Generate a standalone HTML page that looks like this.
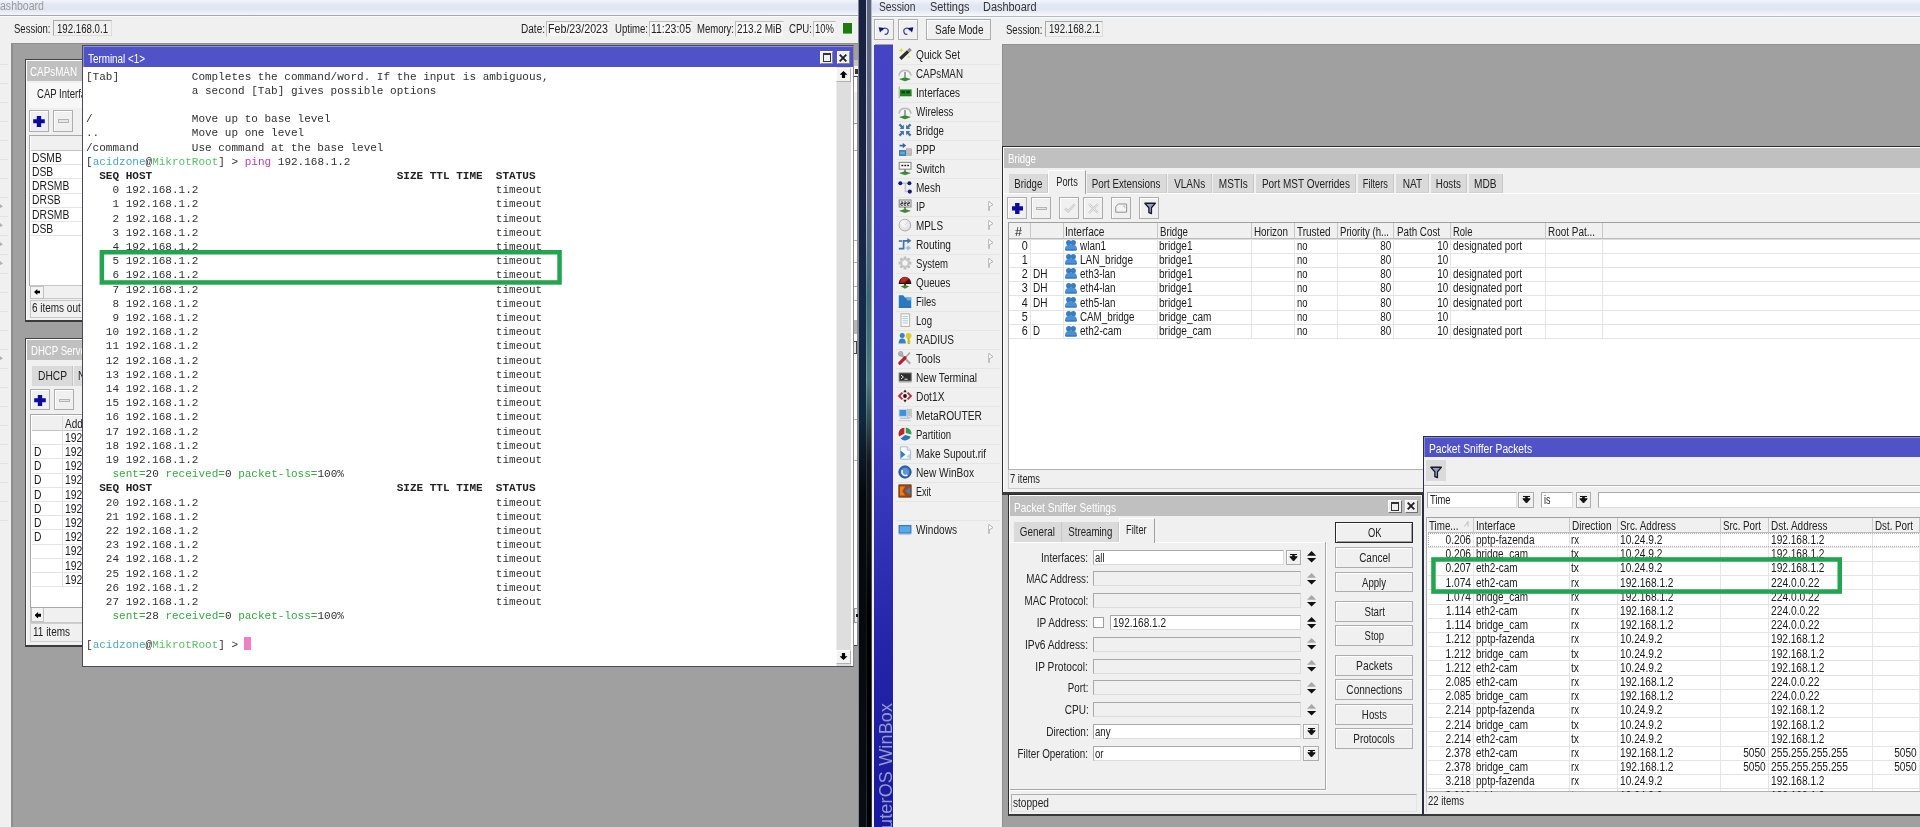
<!DOCTYPE html>
<html><head><meta charset="utf-8"><title>WinBox</title>
<style>
html,body{margin:0;padding:0;background:#a0a0a0;}
#root{will-change:transform;position:relative;width:1920px;height:827px;overflow:hidden;background:#a0a0a0;font-family:"Liberation Sans",sans-serif;font-size:12px;}
.a{position:absolute;box-sizing:border-box;}
.t{position:absolute;white-space:nowrap;display:block;transform-origin:0 0;font-family:"Liberation Sans",sans-serif;}
.m{position:absolute;white-space:pre;font-family:"Liberation Mono",monospace;font-size:11.035px;line-height:14px;color:#303030;}
.m b{font-weight:bold;color:#222;}
.btn{border:1px solid #adadad;background:#f0f0f0;box-shadow:inset 1px 1px 0 #fff;}
.inp{border:1px solid #a8a8a8;border-right-color:#dcdcdc;border-bottom-color:#dcdcdc;background:#fff;}
.inpd{border:1px solid #a8a8a8;border-right-color:#dcdcdc;border-bottom-color:#dcdcdc;background:#f0f0f0;}
svg{position:absolute;overflow:visible;}

</style></head>
<body>
<div id="root">
<div class="a " style="left:0px;top:0px;width:858px;height:16px;background:linear-gradient(#f3f5fb 0%,#e2e7f3 30%,#dfe5f2 60%,#e9edf6 82%,#f4f5fa 100%);border-bottom:1px solid #a4a8b2;"></div>
<span class="t" style="left:0px;top:-0.74px;font-size:12px;line-height:14.4px;color:#9a9a9a;transform:scaleX(0.879);">ashboard</span>
<div class="a " style="left:0px;top:16px;width:858px;height:28px;background:#f0f0f0;border-top:1px solid #fafafa;"></div>
<span class="t" style="left:13.5px;top:22.46px;font-size:12px;line-height:14.4px;color:#222;transform:scaleX(0.793);">Session:</span>
<div class="a inpd" style="left:53px;top:20px;width:59px;height:16px;"></div>
<span class="t" style="left:57px;top:21.66px;font-size:12px;line-height:14.4px;color:#222;transform:scaleX(0.805);">192.168.0.1</span>
<span class="t" style="left:521px;top:22.46px;font-size:12px;line-height:14.4px;color:#222;transform:scaleX(0.837);">Date:</span>
<div class="a " style="left:546px;top:21px;width:64px;height:16px;background:#f6f6f6;border:1px solid #bcbcbc;border-right-color:#f0f0f0;border-bottom-color:#f0f0f0;"></div>
<span class="t" style="left:548px;top:21.76px;font-size:12px;line-height:14.4px;color:#222;transform:scaleX(0.890);">Feb/23/2023</span>
<span class="t" style="left:615px;top:22.46px;font-size:12px;line-height:14.4px;color:#222;transform:scaleX(0.798);">Uptime:</span>
<div class="a " style="left:649px;top:21px;width:44px;height:16px;background:#f6f6f6;border:1px solid #bcbcbc;border-right-color:#f0f0f0;border-bottom-color:#f0f0f0;"></div>
<span class="t" style="left:651px;top:21.76px;font-size:12px;line-height:14.4px;color:#222;transform:scaleX(0.873);">11:23:05</span>
<span class="t" style="left:697px;top:22.46px;font-size:12px;line-height:14.4px;color:#222;transform:scaleX(0.793);">Memory:</span>
<div class="a " style="left:735px;top:21px;width:49px;height:16px;background:#f6f6f6;border:1px solid #bcbcbc;border-right-color:#f0f0f0;border-bottom-color:#f0f0f0;"></div>
<span class="t" style="left:737px;top:21.76px;font-size:12px;line-height:14.4px;color:#222;transform:scaleX(0.833);">213.2 MiB</span>
<span class="t" style="left:788.5px;top:22.46px;font-size:12px;line-height:14.4px;color:#222;transform:scaleX(0.802);">CPU:</span>
<div class="a " style="left:813px;top:21px;width:23px;height:16px;background:#f6f6f6;border:1px solid #bcbcbc;border-right-color:#f0f0f0;border-bottom-color:#f0f0f0;"></div>
<span class="t" style="left:815px;top:21.76px;font-size:12px;line-height:14.4px;color:#222;transform:scaleX(0.791);">10%</span>
<div class="a " style="left:843px;top:23px;width:9.3px;height:11px;background:#1c7a10;border-bottom:1px solid #52c24a;"></div>
<div class="a " style="left:0px;top:43px;width:10.5px;height:784px;background:#f0f0f0;"></div>
<div class="a " style="left:0px;top:64px;width:8px;height:1px;background:#e2e2e2;"></div>
<div class="a " style="left:0px;top:83px;width:8px;height:1px;background:#e2e2e2;"></div>
<div class="a " style="left:0px;top:102px;width:8px;height:1px;background:#e2e2e2;"></div>
<div class="a " style="left:0px;top:121px;width:8px;height:1px;background:#e2e2e2;"></div>
<div class="a " style="left:0px;top:140px;width:8px;height:1px;background:#e2e2e2;"></div>
<div class="a " style="left:0px;top:159px;width:8px;height:1px;background:#e2e2e2;"></div>
<div class="a " style="left:0px;top:178px;width:8px;height:1px;background:#e2e2e2;"></div>
<div class="a " style="left:0px;top:197px;width:8px;height:1px;background:#e2e2e2;"></div>
<div class="a " style="left:0px;top:216px;width:8px;height:1px;background:#e2e2e2;"></div>
<div class="a " style="left:0px;top:235px;width:8px;height:1px;background:#e2e2e2;"></div>
<div class="a " style="left:0px;top:254px;width:8px;height:1px;background:#e2e2e2;"></div>
<div class="a " style="left:0px;top:273px;width:8px;height:1px;background:#e2e2e2;"></div>
<div class="a " style="left:0px;top:292px;width:8px;height:1px;background:#e2e2e2;"></div>
<div class="a " style="left:0px;top:311px;width:8px;height:1px;background:#e2e2e2;"></div>
<div class="a " style="left:0px;top:330px;width:8px;height:1px;background:#e2e2e2;"></div>
<div class="a " style="left:0px;top:349px;width:8px;height:1px;background:#e2e2e2;"></div>
<div class="a " style="left:0px;top:368px;width:8px;height:1px;background:#e2e2e2;"></div>
<div class="a " style="left:0px;top:387px;width:8px;height:1px;background:#e2e2e2;"></div>
<div class="a " style="left:0px;top:406px;width:8px;height:1px;background:#e2e2e2;"></div>
<div class="a " style="left:0px;top:425px;width:8px;height:1px;background:#e2e2e2;"></div>
<div class="a " style="left:0px;top:444px;width:8px;height:1px;background:#e2e2e2;"></div>
<div class="a " style="left:0px;top:463px;width:8px;height:1px;background:#e2e2e2;"></div>
<div class="a " style="left:0px;top:482px;width:8px;height:1px;background:#e2e2e2;"></div>
<div class="a " style="left:0px;top:501px;width:8px;height:1px;background:#e2e2e2;"></div>
<div class="a " style="left:0px;top:520px;width:8px;height:1px;background:#e2e2e2;"></div>
<div class="a " style="left:0px;top:204px;width:3px;height:4px;background:#b0b0b0;clip-path:polygon(0 0,100% 60%,0 100%);"></div>
<div class="a " style="left:0px;top:223px;width:3px;height:4px;background:#b0b0b0;clip-path:polygon(0 0,100% 60%,0 100%);"></div>
<div class="a " style="left:0px;top:242px;width:3px;height:4px;background:#b0b0b0;clip-path:polygon(0 0,100% 60%,0 100%);"></div>
<div class="a " style="left:0px;top:261px;width:3px;height:4px;background:#b0b0b0;clip-path:polygon(0 0,100% 60%,0 100%);"></div>
<div class="a " style="left:0px;top:356px;width:3px;height:4px;background:#b0b0b0;clip-path:polygon(0 0,100% 60%,0 100%);"></div>
<div class="a " style="left:10.5px;top:43px;width:847.5px;height:784px;background:#a0a0a0;border-left:2px solid #8e8e8e;border-top:1px solid #8e8e8e;"></div>
<div class="a " style="left:24.5px;top:59px;width:70px;height:263px;background:#f0f0f0;border:1.5px solid #444;border-bottom:2.5px solid #3a3a3a;box-shadow:inset 1px 1px 0 #fff;"></div>
<div class="a " style="left:26.5px;top:61px;width:68px;height:19.5px;background:#c0c0c0;"></div>
<span class="t" style="left:30px;top:65.26px;font-size:12px;line-height:14.4px;color:#fff;transform:scaleX(0.820);">CAPsMAN</span>
<div class="a " style="left:28.5px;top:82.5px;width:68px;height:25px;background:#f7f7f7;"></div>
<span class="t" style="left:36.5px;top:87.26px;font-size:12px;line-height:14.4px;color:#222;transform:scaleX(0.795);">CAP Interfaces</span>
<div class="a btn" style="left:29.3px;top:110px;width:20px;height:21.5px;"></div>
<div class="a " style="left:33.2px;top:115.6px;width:11.6px;height:11.4px;background:#0a0c9c;clip-path:polygon(31% 0,69% 0,69% 32%,100% 32%,100% 68%,69% 68%,69% 100%,31% 100%,31% 68%,0 68%,0 32%,31% 32%);"></div>
<div class="a btn" style="left:52.8px;top:110px;width:20.5px;height:21.5px;"></div>
<div class="a " style="left:57.5px;top:119px;width:11px;height:3.5px;border:1px solid #b4b4b4;background:#e6e6e6;"></div>
<div class="a " style="left:29.3px;top:135px;width:60px;height:150.5px;background:#fff;border:1px solid #a8a8a8;"></div>
<div class="a " style="left:30.5px;top:136px;width:60px;height:14.5px;background:#f0f0f0;border-bottom:1px solid #c4c4c4;"></div>
<span class="t" style="left:32px;top:150.86px;font-size:12px;line-height:14.4px;color:#1a1a1a;transform:scaleX(0.860);">DSMB</span>
<div class="a " style="left:30.5px;top:164px;width:60px;height:1px;background:#e4e4e4;"></div>
<span class="t" style="left:32px;top:165.06px;font-size:12px;line-height:14.4px;color:#1a1a1a;transform:scaleX(0.860);">DSB</span>
<div class="a " style="left:30.5px;top:178px;width:60px;height:1px;background:#e4e4e4;"></div>
<span class="t" style="left:32px;top:179.26px;font-size:12px;line-height:14.4px;color:#1a1a1a;transform:scaleX(0.860);">DRSMB</span>
<div class="a " style="left:30.5px;top:193px;width:60px;height:1px;background:#e4e4e4;"></div>
<span class="t" style="left:32px;top:193.46px;font-size:12px;line-height:14.4px;color:#1a1a1a;transform:scaleX(0.860);">DRSB</span>
<div class="a " style="left:30.5px;top:207px;width:60px;height:1px;background:#e4e4e4;"></div>
<span class="t" style="left:32px;top:207.66px;font-size:12px;line-height:14.4px;color:#1a1a1a;transform:scaleX(0.860);">DRSMB</span>
<div class="a " style="left:30.5px;top:221px;width:60px;height:1px;background:#e4e4e4;"></div>
<span class="t" style="left:32px;top:221.86px;font-size:12px;line-height:14.4px;color:#1a1a1a;transform:scaleX(0.860);">DSB</span>
<div class="a " style="left:30.5px;top:235px;width:60px;height:1px;background:#e4e4e4;"></div>
<div class="a " style="left:29.5px;top:285px;width:60px;height:14px;background:#f0f0f0;border:1px solid #c8c8c8;"></div>
<div class="a " style="left:30px;top:285.5px;width:14px;height:13px;background:#f4f4f4;border:1px solid #c0c0c0;"></div>
<div class="a " style="left:34px;top:289px;width:6px;height:6px;background:#000;clip-path:polygon(0 50%,55% 0,55% 28%,100% 28%,100% 72%,55% 72%,55% 100%);"></div>
<div class="a " style="left:29.5px;top:299.5px;width:60px;height:18px;border:1px solid #c8c8c8;border-right:0;background:#f0f0f0;"></div>
<span class="t" style="left:32px;top:301.26px;font-size:12px;line-height:14.4px;color:#222;transform:scaleX(0.830);">6 items out of 8</span>
<div class="a " style="left:24.5px;top:337.5px;width:70px;height:309.5px;background:#f0f0f0;border:1.5px solid #444;border-bottom:2.5px solid #3a3a3a;box-shadow:inset 1px 1px 0 #fff;"></div>
<div class="a " style="left:27px;top:339.5px;width:68px;height:20px;background:#c0c0c0;"></div>
<span class="t" style="left:31px;top:344.26px;font-size:12px;line-height:14.4px;color:#fff;transform:scaleX(0.800);">DHCP Server</span>
<div class="a " style="left:32px;top:366px;width:41px;height:19.5px;background:#dadada;border-right:1px solid #c4c4c4;"></div>
<span class="t" style="left:37.5px;top:369.26px;font-size:12px;line-height:14.4px;color:#222;transform:scaleX(0.853);">DHCP</span>
<div class="a " style="left:74px;top:366px;width:20px;height:19.5px;background:#dadada;"></div>
<span class="t" style="left:78px;top:369.26px;font-size:12px;line-height:14.4px;color:#222;transform:scaleX(0.830);">Networks</span>
<div class="a btn" style="left:30.3px;top:389.3px;width:20px;height:21.2px;"></div>
<div class="a " style="left:34.2px;top:394.5px;width:11.6px;height:11.4px;background:#0a0c9c;clip-path:polygon(31% 0,69% 0,69% 32%,100% 32%,100% 68%,69% 68%,69% 100%,31% 100%,31% 68%,0 68%,0 32%,31% 32%);"></div>
<div class="a btn" style="left:53.8px;top:389.3px;width:20.5px;height:21.2px;"></div>
<div class="a " style="left:58.5px;top:398.5px;width:11px;height:3.5px;border:1px solid #b4b4b4;background:#e6e6e6;"></div>
<div class="a " style="left:30.3px;top:414.3px;width:60px;height:194px;background:#fff;border:1px solid #a8a8a8;"></div>
<div class="a " style="left:31.5px;top:415.5px;width:60px;height:15px;background:#f0f0f0;border-bottom:1px solid #c4c4c4;"></div>
<div class="a " style="left:62px;top:415.5px;width:1px;height:171px;background:#dcdcdc;"></div>
<span class="t" style="left:65px;top:416.76px;font-size:12px;line-height:14.4px;color:#222;transform:scaleX(0.830);">Address</span>
<span class="t" style="left:65px;top:430.86px;font-size:12px;line-height:14.4px;color:#1a1a1a;transform:scaleX(0.860);">192.168.0.1</span>
<div class="a " style="left:31.5px;top:444px;width:60px;height:1px;background:#e4e4e4;"></div>
<span class="t" style="left:33.5px;top:445.06px;font-size:12px;line-height:14.4px;color:#1a1a1a;transform:scaleX(0.860);">D</span>
<span class="t" style="left:65px;top:445.06px;font-size:12px;line-height:14.4px;color:#1a1a1a;transform:scaleX(0.860);">192.168.0.1</span>
<div class="a " style="left:31.5px;top:458px;width:60px;height:1px;background:#e4e4e4;"></div>
<span class="t" style="left:33.5px;top:459.26px;font-size:12px;line-height:14.4px;color:#1a1a1a;transform:scaleX(0.860);">D</span>
<span class="t" style="left:65px;top:459.26px;font-size:12px;line-height:14.4px;color:#1a1a1a;transform:scaleX(0.860);">192.168.0.1</span>
<div class="a " style="left:31.5px;top:473px;width:60px;height:1px;background:#e4e4e4;"></div>
<span class="t" style="left:33.5px;top:473.46px;font-size:12px;line-height:14.4px;color:#1a1a1a;transform:scaleX(0.860);">D</span>
<span class="t" style="left:65px;top:473.46px;font-size:12px;line-height:14.4px;color:#1a1a1a;transform:scaleX(0.860);">192.168.0.1</span>
<div class="a " style="left:31.5px;top:487px;width:60px;height:1px;background:#e4e4e4;"></div>
<span class="t" style="left:33.5px;top:487.66px;font-size:12px;line-height:14.4px;color:#1a1a1a;transform:scaleX(0.860);">D</span>
<span class="t" style="left:65px;top:487.66px;font-size:12px;line-height:14.4px;color:#1a1a1a;transform:scaleX(0.860);">192.168.0.1</span>
<div class="a " style="left:31.5px;top:501px;width:60px;height:1px;background:#e4e4e4;"></div>
<span class="t" style="left:33.5px;top:501.86px;font-size:12px;line-height:14.4px;color:#1a1a1a;transform:scaleX(0.860);">D</span>
<span class="t" style="left:65px;top:501.86px;font-size:12px;line-height:14.4px;color:#1a1a1a;transform:scaleX(0.860);">192.168.0.1</span>
<div class="a " style="left:31.5px;top:515px;width:60px;height:1px;background:#e4e4e4;"></div>
<span class="t" style="left:33.5px;top:516.06px;font-size:12px;line-height:14.4px;color:#1a1a1a;transform:scaleX(0.860);">D</span>
<span class="t" style="left:65px;top:516.06px;font-size:12px;line-height:14.4px;color:#1a1a1a;transform:scaleX(0.860);">192.168.0.1</span>
<div class="a " style="left:31.5px;top:529px;width:60px;height:1px;background:#e4e4e4;"></div>
<span class="t" style="left:33.5px;top:530.26px;font-size:12px;line-height:14.4px;color:#1a1a1a;transform:scaleX(0.860);">D</span>
<span class="t" style="left:65px;top:530.26px;font-size:12px;line-height:14.4px;color:#1a1a1a;transform:scaleX(0.860);">192.168.0.1</span>
<div class="a " style="left:31.5px;top:544px;width:60px;height:1px;background:#e4e4e4;"></div>
<span class="t" style="left:65px;top:544.46px;font-size:12px;line-height:14.4px;color:#1a1a1a;transform:scaleX(0.860);">192.168.0.1</span>
<div class="a " style="left:31.5px;top:558px;width:60px;height:1px;background:#e4e4e4;"></div>
<span class="t" style="left:65px;top:558.66px;font-size:12px;line-height:14.4px;color:#1a1a1a;transform:scaleX(0.860);">192.168.0.1</span>
<div class="a " style="left:31.5px;top:572px;width:60px;height:1px;background:#e4e4e4;"></div>
<span class="t" style="left:65px;top:572.86px;font-size:12px;line-height:14.4px;color:#1a1a1a;transform:scaleX(0.860);">192.168.0.1</span>
<div class="a " style="left:31.5px;top:586px;width:60px;height:1px;background:#e4e4e4;"></div>
<div class="a " style="left:30.3px;top:608px;width:60px;height:14.5px;background:#f0f0f0;border:1px solid #c8c8c8;border-top:0;"></div>
<div class="a " style="left:30.8px;top:608px;width:13.5px;height:14px;background:#f4f4f4;border:1px solid #c0c0c0;border-top:0;"></div>
<div class="a " style="left:34.5px;top:612px;width:6.5px;height:6.5px;background:#000;clip-path:polygon(0 50%,55% 0,55% 28%,100% 28%,100% 72%,55% 72%,55% 100%);"></div>
<div class="a " style="left:30.3px;top:622.5px;width:60px;height:19px;border:1px solid #cfcfcf;border-right:0;background:#f0f0f0;"></div>
<span class="t" style="left:33px;top:624.76px;font-size:12px;line-height:14.4px;color:#222;transform:scaleX(0.832);">11 items</span>
<div class="a " style="left:851px;top:68px;width:7px;height:578px;background:#fff;border-left:1px solid #555;border-right:1px solid #8a8a8a;border-bottom:1px solid #444;"></div>
<div class="a " style="left:854px;top:608px;width:4px;height:14.5px;background:#ececec;border:1px solid #9a9a9a;"></div>
<div class="a " style="left:855.5px;top:613.5px;width:2px;height:3px;background:#111;"></div>
<div class="a " style="left:853px;top:59.5px;width:5px;height:7px;background:#c4c4c4;"></div>
<div class="a " style="left:852px;top:66px;width:6px;height:11px;background:#f4f4f4;border-bottom:1px solid #444;"></div>
<div class="a " style="left:855px;top:69px;width:2.5px;height:5px;background:#333;"></div>
<div class="a " style="left:852px;top:92px;width:5px;height:32px;background:#f0f0f0;border-bottom:1px solid #999;"></div>
<div class="a " style="left:852px;top:150px;width:5px;height:1px;background:#b0b0b0;"></div>
<div class="a " style="left:852px;top:240px;width:5px;height:1px;background:#b0b0b0;"></div>
<div class="a " style="left:852px;top:262px;width:5px;height:1px;background:#b0b0b0;"></div>
<div class="a " style="left:852px;top:286px;width:5px;height:1px;background:#b0b0b0;"></div>
<div class="a " style="left:852px;top:300px;width:5px;height:1px;background:#b0b0b0;"></div>
<div class="a " style="left:852px;top:325px;width:5px;height:1px;background:#b0b0b0;"></div>
<div class="a " style="left:852px;top:352px;width:5px;height:1px;background:#b0b0b0;"></div>
<div class="a " style="left:852px;top:419px;width:5px;height:1px;background:#b0b0b0;"></div>
<div class="a " style="left:852px;top:460px;width:5px;height:1px;background:#b0b0b0;"></div>
<div class="a " style="left:852px;top:320px;width:5px;height:14px;background:#b8b8b8;"></div>
<div class="a " style="left:852px;top:341px;width:5px;height:13px;background:#e8e8e8;border:1px solid #444;"></div>
<div class="a " style="left:82px;top:45.3px;width:771.8px;height:622px;background:#fff;border:1px solid #4a4a5a;border-right-color:#8a8a8a;"></div>
<div class="a " style="left:83px;top:46.3px;width:769.5px;height:20.3px;background:#5052c8;border-top:1px solid #8c8ce0;border-left:1px solid #8c8ce0;"></div>
<span class="t" style="left:88px;top:51.56px;font-size:12px;line-height:14.4px;color:#fff;transform:scaleX(0.822);">Terminal &lt;1&gt;</span>
<div class="a " style="left:820px;top:51px;width:13px;height:12.5px;background:#f0f0f0;border:1px solid #fff;border-right-color:#8a8a8a;border-bottom-color:#8a8a8a;"></div>
<div class="a " style="left:822.5px;top:53px;width:8.5px;height:8.5px;border:1px solid #333;border-top-width:2px;"></div>
<div class="a " style="left:836.5px;top:51px;width:13px;height:12.5px;background:#f0f0f0;border:1px solid #fff;border-right-color:#8a8a8a;border-bottom-color:#8a8a8a;"></div>
<svg style="left:839px;top:53.5px" width="8" height="8" viewBox="0 0 8 8"><path d="M0.7 0.7L7.3 7.3M7.3 0.7L0.7 7.3" stroke="#222" stroke-width="1.9"/></svg>
<div class="a " style="left:835.5px;top:67px;width:15px;height:599px;background:#dedede;border-left:1px solid #ececec;"></div>
<div class="a " style="left:836px;top:68px;width:14.5px;height:13.5px;background:#f2f2f2;border:1px solid #fff;border-right-color:#b0b0b0;border-bottom-color:#b0b0b0;"></div>
<div class="a " style="left:839.5px;top:71px;width:8px;height:7px;background:#000;clip-path:polygon(50% 0,100% 55%,70% 55%,70% 100%,30% 100%,30% 55%,0 55%);"></div>
<div class="a " style="left:836px;top:649.5px;width:14.5px;height:14px;background:#f2f2f2;border:1px solid #fff;border-right-color:#b0b0b0;border-bottom-color:#b0b0b0;"></div>
<div class="a " style="left:839.5px;top:653px;width:8px;height:7px;background:#000;clip-path:polygon(50% 100%,100% 45%,70% 45%,70% 0,30% 0,30% 45%,0 45%);"></div>
<div class="m" style="left:86px;top:69.6px">[Tab]           Completes the command/word. If the input is ambiguous,</div>
<div class="m" style="left:86px;top:83.8px">                a second [Tab] gives possible options</div>
<div class="m" style="left:86px;top:112.2px">/               Move up to base level</div>
<div class="m" style="left:86px;top:126.4px">..              Move up one level</div>
<div class="m" style="left:86px;top:140.6px">/command        Use command at the base level</div>
<div class="m" style="left:86px;top:154.8px">[<span style="color:#4aa8b8">acidzone</span>@<span style="color:#58bd68">MikrotRoot</span>] &gt; <span style="color:#b244b2">ping</span> 192.168.1.2</div>
<div class="m" style="left:86px;top:169.0px"><b>  SEQ HOST                                     SIZE TTL TIME  STATUS</b></div>
<div class="m" style="left:86px;top:183.2px">    0 192.168.1.2                                             timeout</div>
<div class="m" style="left:86px;top:197.4px">    1 192.168.1.2                                             timeout</div>
<div class="m" style="left:86px;top:211.6px">    2 192.168.1.2                                             timeout</div>
<div class="m" style="left:86px;top:225.8px">    3 192.168.1.2                                             timeout</div>
<div class="m" style="left:86px;top:240.0px">    4 192.168.1.2                                             timeout</div>
<div class="m" style="left:86px;top:254.2px">    5 192.168.1.2                                             timeout</div>
<div class="m" style="left:86px;top:268.4px">    6 192.168.1.2                                             timeout</div>
<div class="m" style="left:86px;top:282.6px">    7 192.168.1.2                                             timeout</div>
<div class="m" style="left:86px;top:296.8px">    8 192.168.1.2                                             timeout</div>
<div class="m" style="left:86px;top:311.0px">    9 192.168.1.2                                             timeout</div>
<div class="m" style="left:86px;top:325.2px">   10 192.168.1.2                                             timeout</div>
<div class="m" style="left:86px;top:339.4px">   11 192.168.1.2                                             timeout</div>
<div class="m" style="left:86px;top:353.6px">   12 192.168.1.2                                             timeout</div>
<div class="m" style="left:86px;top:367.8px">   13 192.168.1.2                                             timeout</div>
<div class="m" style="left:86px;top:382.0px">   14 192.168.1.2                                             timeout</div>
<div class="m" style="left:86px;top:396.2px">   15 192.168.1.2                                             timeout</div>
<div class="m" style="left:86px;top:410.4px">   16 192.168.1.2                                             timeout</div>
<div class="m" style="left:86px;top:424.6px">   17 192.168.1.2                                             timeout</div>
<div class="m" style="left:86px;top:438.8px">   18 192.168.1.2                                             timeout</div>
<div class="m" style="left:86px;top:453.0px">   19 192.168.1.2                                             timeout</div>
<div class="m" style="left:86px;top:467.2px">    <span style="color:#3aa646">sent</span><span style="color:#3aa646">=</span>20 <span style="color:#3aa646">received</span><span style="color:#3aa646">=</span>0 <span style="color:#3aa646">packet-loss</span><span style="color:#3aa646">=</span>100%</div>
<div class="m" style="left:86px;top:481.4px"><b>  SEQ HOST                                     SIZE TTL TIME  STATUS</b></div>
<div class="m" style="left:86px;top:495.6px">   20 192.168.1.2                                             timeout</div>
<div class="m" style="left:86px;top:509.8px">   21 192.168.1.2                                             timeout</div>
<div class="m" style="left:86px;top:524.0px">   22 192.168.1.2                                             timeout</div>
<div class="m" style="left:86px;top:538.2px">   23 192.168.1.2                                             timeout</div>
<div class="m" style="left:86px;top:552.4px">   24 192.168.1.2                                             timeout</div>
<div class="m" style="left:86px;top:566.6px">   25 192.168.1.2                                             timeout</div>
<div class="m" style="left:86px;top:580.8px">   26 192.168.1.2                                             timeout</div>
<div class="m" style="left:86px;top:595.0px">   27 192.168.1.2                                             timeout</div>
<div class="m" style="left:86px;top:609.2px">    <span style="color:#3aa646">sent</span><span style="color:#3aa646">=</span>28 <span style="color:#3aa646">received</span><span style="color:#3aa646">=</span>0 <span style="color:#3aa646">packet-loss</span><span style="color:#3aa646">=</span>100%</div>
<div class="m" style="left:86px;top:637.6px">[<span style="color:#4aa8b8">acidzone</span>@<span style="color:#58bd68">MikrotRoot</span>] &gt; <span style="position:absolute;left:158.2px;top:-1.1px;width:6.8px;height:13.8px;background:#f27fc4"></span></div>
<svg style="left:0;top:0" width="860" height="300"><rect x="101.85" y="252.25" width="457.7" height="30.2" fill="none" stroke="#23a44e" stroke-width="4.5"/></svg>
<div class="a " style="left:858px;top:0px;width:14px;height:827px;background:linear-gradient(#1a2244 0%,#1a2244 22%,#16294a 35%,#102a44 50%,#05080c 60%,#0a0c10 100%);"></div>
<div class="a " style="left:858px;top:0px;width:1px;height:827px;background:#808694;"></div>
<div class="a " style="left:865.5px;top:0px;width:1.5px;height:827px;background:linear-gradient(#c4cad8 0%,#c4cad8 24%,#5a8890 36%,#7aa0a0 46%,#30383c 55%,#101418 75%,#203050 100%);"></div>
<div class="a " style="left:867px;top:0px;width:4px;height:827px;background:linear-gradient(#5c6680 0%,#5c6680 24%,#3c6674 36%,#4c787c 46%,#14181c 56%,#000 75%,#000 100%);"></div>
<div class="a " style="left:871px;top:0px;width:1px;height:827px;background:linear-gradient(#b8bccc 0%,#9098ac 25%,#8ea8ac 45%,#50585c 60%,#30343c 100%);"></div>
<div class="a " style="left:872px;top:0px;width:1048px;height:17px;background:linear-gradient(#f3f5fb 0%,#e2e7f3 30%,#dfe5f2 58%,#eceff7 80%,#f8f9fc 100%);border-bottom:1px solid #b4b8c0;"></div>
<span class="t" style="left:879.4px;top:-0.24px;font-size:12px;line-height:14.4px;color:#333;transform:scaleX(0.855);">Session</span>
<span class="t" style="left:929.5px;top:-0.24px;font-size:12px;line-height:14.4px;color:#333;transform:scaleX(0.911);">Settings</span>
<span class="t" style="left:982.5px;top:-0.24px;font-size:12px;line-height:14.4px;color:#333;transform:scaleX(0.911);">Dashboard</span>
<div class="a " style="left:872px;top:17px;width:1048px;height:27px;background:#f0f0f0;border-top:1px solid #fafafa;"></div>
<div class="a btn" style="left:874.3px;top:19.3px;width:20px;height:21px;"></div>
<svg style="left:878.2px;top:24.6px" width="12" height="11" viewBox="0 0 12 11"><path d="M4.2 5.2A3.1 3.1 0 1 1 6.6 9.3" fill="none" stroke="#3c3c7c" stroke-width="1.15"/><path d="M0.6 2.2L6 3 2 7.4Z" fill="#10107a"/></svg>
<div class="a btn" style="left:898.3px;top:19.3px;width:20px;height:21px;"></div>
<svg style="left:902.2px;top:24.6px" width="12" height="11" viewBox="0 0 12 11"><path d="M7.8 5.2A3.1 3.1 0 1 0 5.4 9.3" fill="none" stroke="#3c3c7c" stroke-width="1.15"/><path d="M11.4 2.2L6 3 10 7.4Z" fill="#10107a"/></svg>
<div class="a btn" style="left:925.8px;top:19.3px;width:65.5px;height:21px;"></div>
<span class="t" style="left:935px;top:23.26px;font-size:12px;line-height:14.4px;color:#222;transform:scaleX(0.836);">Safe Mode</span>
<span class="t" style="left:1005.6px;top:23.26px;font-size:12px;line-height:14.4px;color:#222;transform:scaleX(0.793);">Session:</span>
<div class="a inpd" style="left:1045px;top:21px;width:58px;height:16px;"></div>
<span class="t" style="left:1048.5px;top:22.26px;font-size:12px;line-height:14.4px;color:#222;transform:scaleX(0.805);">192.168.2.1</span>
<div class="a " style="left:872px;top:44px;width:2.5px;height:783px;background:#f0f0f0;"></div>
<div class="a " style="left:874.3px;top:45px;width:18.7px;height:782px;background:linear-gradient(#4444c4 0%,#3e3ec0 50%,#2424a8 78%,#1818a0 100%);"></div>
<div class="a" style="left:875.5px;top:829px;width:200px;height:18px;transform-origin:0 0;transform:rotate(-90deg) scaleX(0.945);font-size:19px;line-height:19px;color:#949bcb;white-space:nowrap;letter-spacing:0.2px">uterOS WinBox</div>
<div class="a " style="left:893px;top:44px;width:109px;height:783px;background:#f0f0f0;"></div>
<div class="a " style="left:1002px;top:43.5px;width:918px;height:784px;background:#a0a0a0;border-left:1px solid #909090;border-top:1px solid #909090;"></div>
<span class="t" style="left:915.8px;top:47.76px;font-size:12px;line-height:14.4px;color:#222;transform:scaleX(0.846);">Quick Set</span>
<svg style="left:897.5px;top:46.9px" width="14" height="14" viewBox="0 0 14 14"><path d="M1.2 10.6L9 3.2L11.2 5.6L3.4 13Z" fill="#2b2b2b"/><path d="M9 3.2L11.6 .8L13.8 3.2L11.2 5.6Z" fill="#8c8c8c"/><path d="M3.2 .6L4 2.4L5.8 3.2L4 4L3.2 5.8L2.4 4L.6 3.2L2.4 2.4Z" fill="#d8e428"/><path d="M10.8 8.2L11.3 9.4L12.5 9.9L11.3 10.4L10.8 11.6L10.3 10.4L9.1 9.9L10.3 9.4Z" fill="#d8e428"/></svg>
<div class="a " style="left:896px;top:63.5px;width:104px;height:1px;background:#e5e5e5;"></div>
<span class="t" style="left:915.8px;top:66.76px;font-size:12px;line-height:14.4px;color:#222;transform:scaleX(0.820);">CAPsMAN</span>
<svg style="left:897.5px;top:65.9px" width="14" height="14" viewBox="0 0 14 14"><path d="M0.9 9.2A6.1 6.3 0 0 1 13.1 9.2Z" fill="#f6f6f6"/><path d="M1 9.6A6.1 6.3 0 0 1 13 9.6" fill="none" stroke="#bdbdbd" stroke-width="1.7"/><path d="M7 6V11.4" stroke="#5a5a5a" stroke-width="1.1"/><path d="M1.6 13L7 11.2L12.4 13L7 14.9Z" fill="#2f8f2f"/><path d="M1.6 13L7 14.9L12.4 13" fill="none" stroke="#1d6a1d" stroke-width=".5"/></svg>
<div class="a " style="left:896px;top:82.5px;width:104px;height:1px;background:#e5e5e5;"></div>
<span class="t" style="left:915.8px;top:85.76px;font-size:12px;line-height:14.4px;color:#222;transform:scaleX(0.835);">Interfaces</span>
<svg style="left:897.5px;top:84.9px" width="14" height="14" viewBox="0 0 14 14"><path d="M1.2 1.4V13.2" stroke="#8fb08f" stroke-width="1"/><rect x="2" y="4.4" width="11.6" height="6.4" fill="#1f8a1f"/><rect x="3.4" y="5.8" width="3.6" height="2.6" fill="#0b4a0b"/><rect x="8.2" y="5.8" width="3.6" height="2.6" fill="#0b4a0b"/><path d="M2 10.8H13.6" stroke="#0f5f0f" stroke-width=".8"/></svg>
<div class="a " style="left:896px;top:101.5px;width:104px;height:1px;background:#e5e5e5;"></div>
<span class="t" style="left:915.8px;top:104.76px;font-size:12px;line-height:14.4px;color:#222;transform:scaleX(0.815);">Wireless</span>
<svg style="left:897.5px;top:103.9px" width="14" height="14" viewBox="0 0 14 14"><path d="M0.9 9.2A6.1 6.3 0 0 1 13.1 9.2Z" fill="#f6f6f6"/><path d="M1 9.6A6.1 6.3 0 0 1 13 9.6" fill="none" stroke="#bdbdbd" stroke-width="1.7"/><path d="M7 6V11.4" stroke="#5a5a5a" stroke-width="1.1"/><path d="M1.6 13L7 11.2L12.4 13L7 14.9Z" fill="#2f8f2f"/><path d="M1.6 13L7 14.9L12.4 13" fill="none" stroke="#1d6a1d" stroke-width=".5"/></svg>
<div class="a " style="left:896px;top:120.5px;width:104px;height:1px;background:#e5e5e5;"></div>
<span class="t" style="left:915.8px;top:123.76px;font-size:12px;line-height:14.4px;color:#222;transform:scaleX(0.807);">Bridge</span>
<svg style="left:897.5px;top:122.9px" width="14" height="14" viewBox="0 0 14 14"><g fill="#3f74ad"><path d="M.6 2.2L2.2 .6L4.6 3L5.9 1.7V5.9H1.7L3 4.6Z"/><path d="M13.4 2.2L11.8 .6L9.4 3L8.1 1.7V5.9H12.3L11 4.6Z"/><path d="M.6 11.8L2.2 13.4L4.6 11L5.9 12.3V8.1H1.7L3 9.4Z"/><path d="M13.4 11.8L11.8 13.4L9.4 11L8.1 12.3V8.1H12.3L11 9.4Z"/></g></svg>
<div class="a " style="left:896px;top:139.5px;width:104px;height:1px;background:#e5e5e5;"></div>
<span class="t" style="left:915.8px;top:142.76px;font-size:12px;line-height:14.4px;color:#222;transform:scaleX(0.812);">PPP</span>
<svg style="left:897.5px;top:141.9px" width="14" height="14" viewBox="0 0 14 14"><path d="M1.6 3.6H6" stroke="#2d62a6" stroke-width="1.7"/><path d="M4.8 .9L8.2 3.6L4.8 6.3Z" fill="#2d62a6"/><rect x="1.4" y="8.6" width="6.2" height="4.8" fill="#3f8fd0" stroke="#2d6cb0" stroke-width=".8"/><path d="M2.4 11H6.6" stroke="#9ed0f0" stroke-width=".8"/><rect x="8.6" y="6.8" width="4.8" height="6.6" fill="#c9c2c6" stroke="#a8a4a8" stroke-width=".7"/><rect x="9.2" y="7.4" width="3.6" height="2" fill="#e0a8b8"/><rect x="9.2" y="10.8" width="3.6" height="2" fill="#9ac89a"/></svg>
<div class="a " style="left:896px;top:158.5px;width:104px;height:1px;background:#e5e5e5;"></div>
<span class="t" style="left:915.8px;top:161.76px;font-size:12px;line-height:14.4px;color:#222;transform:scaleX(0.821);">Switch</span>
<svg style="left:897.5px;top:160.9px" width="14" height="14" viewBox="0 0 14 14"><rect x="1.2" y="1.4" width="11.8" height="6.8" fill="#fafafa" stroke="#8a8a8a" stroke-width="1.1"/><path d="M3.4 4.6H11" stroke="#222" stroke-width="1.5" stroke-dasharray="1.9 1"/><path d="M7 8.4V11" stroke="#3a3a3a" stroke-width="1.1"/><path d="M1.6 12L7 10.3L12.4 12L7 13.8Z" fill="#2f8f2f"/><path d="M1.6 12L7 13.8L12.4 12" fill="none" stroke="#1d6a1d" stroke-width=".5"/></svg>
<div class="a " style="left:896px;top:177.5px;width:104px;height:1px;background:#e5e5e5;"></div>
<span class="t" style="left:915.8px;top:180.76px;font-size:12px;line-height:14.4px;color:#222;transform:scaleX(0.835);">Mesh</span>
<svg style="left:897.5px;top:179.9px" width="14" height="14" viewBox="0 0 14 14"><path d="M2.4 3.2H11.4M7.4 3.2V11.4H11.6" stroke="#c4c4c4" stroke-width="1.5" fill="none"/><circle cx="2.3" cy="3.2" r="2" fill="#141a7c"/><circle cx="11.4" cy="3.2" r="2" fill="#141a7c"/><circle cx="11.8" cy="11.6" r="2.1" fill="#141a7c"/></svg>
<div class="a " style="left:896px;top:196.5px;width:104px;height:1px;background:#e5e5e5;"></div>
<span class="t" style="left:915.8px;top:199.76px;font-size:12px;line-height:14.4px;color:#222;transform:scaleX(0.794);">IP</span>
<svg style="left:988px;top:200.7px" width="6" height="10" viewBox="0 0 6 10"><path d="M1 0.3V9.8" stroke="#909090" stroke-width="1"/><path d="M1 0.5L5 3.6L1 6" fill="#fafafa" stroke="#a4a4a4" stroke-width="0.8"/></svg>
<svg style="left:897.5px;top:198.9px" width="14" height="14" viewBox="0 0 14 14"><rect x="1.2" y="1" width="11.8" height="7" fill="#f2f2f2" stroke="#8a8a8a" stroke-width="1.1"/><path d="M2.8 3H4.8V4.5H2.8V6.2H4.8M6.1 3H8.1V4.5H6.1V6.2H8.1M9.4 3H11.4V4.5H9.4V6.2H11.4" stroke="#222" stroke-width=".9" fill="none"/><path d="M7 8V10.6" stroke="#3a3a3a" stroke-width="1.1"/><path d="M1.6 11.8L7 10.1L12.4 11.8L7 13.6Z" fill="#2f8f2f"/><path d="M1.6 11.8L7 13.6L12.4 11.8" fill="none" stroke="#1d6a1d" stroke-width=".5"/></svg>
<div class="a " style="left:896px;top:215.5px;width:104px;height:1px;background:#e5e5e5;"></div>
<span class="t" style="left:915.8px;top:218.76px;font-size:12px;line-height:14.4px;color:#222;transform:scaleX(0.826);">MPLS</span>
<svg style="left:988px;top:219.7px" width="6" height="10" viewBox="0 0 6 10"><path d="M1 0.3V9.8" stroke="#909090" stroke-width="1"/><path d="M1 0.5L5 3.6L1 6" fill="#fafafa" stroke="#a4a4a4" stroke-width="0.8"/></svg>
<svg style="left:897.5px;top:217.9px" width="14" height="14" viewBox="0 0 14 14"><circle cx="7.2" cy="7.4" r="6.1" fill="#c4c4c4"/><circle cx="6.8" cy="7" r="5.8" fill="#e6e6e6" stroke="#aeaeae" stroke-width=".9"/><circle cx="6" cy="5.6" r="3.4" fill="#f4f4f4"/><path d="M7 7L9.6 4" stroke="#cfcfcf" stroke-width="1"/></svg>
<div class="a " style="left:896px;top:234.5px;width:104px;height:1px;background:#e5e5e5;"></div>
<span class="t" style="left:915.8px;top:237.76px;font-size:12px;line-height:14.4px;color:#222;transform:scaleX(0.846);">Routing</span>
<svg style="left:988px;top:238.7px" width="6" height="10" viewBox="0 0 6 10"><path d="M1 0.3V9.8" stroke="#909090" stroke-width="1"/><path d="M1 0.5L5 3.6L1 6" fill="#fafafa" stroke="#a4a4a4" stroke-width="0.8"/></svg>
<svg style="left:897.5px;top:236.9px" width="14" height="14" viewBox="0 0 14 14"><path d="M.8 4H4.2" stroke="#3f74ad" stroke-width="1.6"/><path d="M.8 11.6H5.6V3.8H10" stroke="#3f74ad" stroke-width="1.7" fill="none"/><path d="M9.4 .9L13.4 3.8L9.4 6.7Z" fill="#3f74ad"/><path d="M7.6 11H10" stroke="#9bbde0" stroke-width="1.6"/><path d="M9.4 8.2L13.2 11L9.4 13.8Z" fill="#9bbde0"/></svg>
<div class="a " style="left:896px;top:253.5px;width:104px;height:1px;background:#e5e5e5;"></div>
<span class="t" style="left:915.8px;top:256.76px;font-size:12px;line-height:14.4px;color:#222;transform:scaleX(0.800);">System</span>
<svg style="left:988px;top:257.7px" width="6" height="10" viewBox="0 0 6 10"><path d="M1 0.3V9.8" stroke="#909090" stroke-width="1"/><path d="M1 0.5L5 3.6L1 6" fill="#fafafa" stroke="#a4a4a4" stroke-width="0.8"/></svg>
<svg style="left:897.5px;top:255.9px" width="14" height="14" viewBox="0 0 14 14"><g fill="#bdbdbd"><rect x="5.6" y=".6" width="2.8" height="12.8" rx=".5"/><rect x=".6" y="5.6" width="12.8" height="2.8" rx=".5"/><rect x="5.6" y=".6" width="2.8" height="12.8" rx=".5" transform="rotate(45 7 7)"/><rect x=".6" y="5.6" width="12.8" height="2.8" rx=".5" transform="rotate(45 7 7)"/></g><circle cx="7" cy="7" r="4.6" fill="#c6c6c6"/><circle cx="7" cy="7" r="2.7" fill="#f4f4f4"/></svg>
<div class="a " style="left:896px;top:272.5px;width:104px;height:1px;background:#e5e5e5;"></div>
<span class="t" style="left:915.8px;top:275.76px;font-size:12px;line-height:14.4px;color:#222;transform:scaleX(0.821);">Queues</span>
<svg style="left:897.5px;top:274.9px" width="14" height="14" viewBox="0 0 14 14"><path d="M.8 8.4A6.2 6.4 0 0 1 13.2 8.4Z" fill="#5a1010"/><path d="M3.6 3A6.2 6.4 0 0 1 11 3.4L5.4 8.4H1.8Z" fill="#b82828"/><path d="M.8 8.4H13.2" stroke="#111" stroke-width="1.2"/><path d="M7 8.8V11" stroke="#a02020" stroke-width="2"/><path d="M2.6 11.2L7 13.8L11.4 11.2L7 10.2Z" fill="#2f8f2f"/></svg>
<div class="a " style="left:896px;top:291.5px;width:104px;height:1px;background:#e5e5e5;"></div>
<span class="t" style="left:915.8px;top:294.76px;font-size:12px;line-height:14.4px;color:#222;transform:scaleX(0.789);">Files</span>
<svg style="left:897.5px;top:293.9px" width="14" height="14" viewBox="0 0 14 14"><path d="M.8 1.2H5.2L7 3.6H13.2V13.4H.8Z" fill="#2a78c2"/><path d="M7.6 3.6H13.2V6.6H9.4Z" fill="#6fb0e4"/><path d="M.8 13.4H13.2" stroke="#1f5c9c" stroke-width=".8"/></svg>
<div class="a " style="left:896px;top:310.5px;width:104px;height:1px;background:#e5e5e5;"></div>
<span class="t" style="left:915.8px;top:313.76px;font-size:12px;line-height:14.4px;color:#222;transform:scaleX(0.799);">Log</span>
<svg style="left:897.5px;top:312.9px" width="14" height="14" viewBox="0 0 14 14"><rect x="3" y=".8" width="8.6" height="12.6" fill="#fbfbf6" stroke="#b4b4a4" stroke-width="1"/><path d="M4.6 3.4H10M4.6 5.6H10M4.6 7.8H10M4.6 10H10" stroke="#a9cbe4" stroke-width="1"/></svg>
<div class="a " style="left:896px;top:329.5px;width:104px;height:1px;background:#e5e5e5;"></div>
<span class="t" style="left:915.8px;top:332.76px;font-size:12px;line-height:14.4px;color:#222;transform:scaleX(0.838);">RADIUS</span>
<svg style="left:897.5px;top:331.9px" width="14" height="14" viewBox="0 0 14 14"><circle cx="4.2" cy="3.6" r="2.5" fill="#3a80c6"/><path d="M.6 11.6C.6 7.6 2.2 6.6 4.2 6.6S7.8 7.6 7.8 11.6Z" fill="#3a80c6"/><circle cx="10.6" cy="3.8" r="2.9" fill="#dccb22"/><path d="M10.6 6V12" stroke="#c9b51c" stroke-width="2"/><path d="M10.6 9.4H12.4M10.6 11.4H12.2" stroke="#c9b51c" stroke-width="1"/></svg>
<div class="a " style="left:896px;top:348.5px;width:104px;height:1px;background:#e5e5e5;"></div>
<span class="t" style="left:915.8px;top:351.76px;font-size:12px;line-height:14.4px;color:#222;transform:scaleX(0.875);">Tools</span>
<svg style="left:988px;top:352.7px" width="6" height="10" viewBox="0 0 6 10"><path d="M1 0.3V9.8" stroke="#909090" stroke-width="1"/><path d="M1 0.5L5 3.6L1 6" fill="#fafafa" stroke="#a4a4a4" stroke-width="0.8"/></svg>
<svg style="left:897.5px;top:350.9px" width="14" height="14" viewBox="0 0 14 14"><path d="M2.2 2.6L11.6 12" stroke="#a8a8a8" stroke-width="2.2" stroke-linecap="round"/><circle cx="2.6" cy="2.8" r="2" fill="none" stroke="#a8a8a8" stroke-width="1.4"/><path d="M12 1.6L7.6 6.2" stroke="#a8a8a8" stroke-width="1.6"/><path d="M1.8 12.2L7 6.8" stroke="#b22234" stroke-width="3.2" stroke-linecap="round"/></svg>
<div class="a " style="left:896px;top:367.5px;width:104px;height:1px;background:#e5e5e5;"></div>
<span class="t" style="left:915.8px;top:370.76px;font-size:12px;line-height:14.4px;color:#222;transform:scaleX(0.842);">New Terminal</span>
<svg style="left:897.5px;top:369.9px" width="14" height="14" viewBox="0 0 14 14"><rect x="1.2" y="3" width="12" height="8" fill="#2e2e2e" stroke="#707070" stroke-width="1"/><path d="M1 12H13.4" stroke="#a4a4a4" stroke-width="1"/><path d="M3 5L5.4 7L3 9M6.4 9.2H9.6" stroke="#f0f0f0" stroke-width="1" fill="none"/></svg>
<div class="a " style="left:896px;top:386.5px;width:104px;height:1px;background:#e5e5e5;"></div>
<span class="t" style="left:915.8px;top:389.76px;font-size:12px;line-height:14.4px;color:#222;transform:scaleX(0.855);">Dot1X</span>
<svg style="left:897.5px;top:388.9px" width="14" height="14" viewBox="0 0 14 14"><path d="M4.4 3.6L1 7L4.4 10.4M9.6 3.6L13 7L9.6 10.4" fill="none" stroke="#c0283c" stroke-width="1.8"/><path d="M7 .6L8.8 3.2H5.2ZM7 13.4L8.8 10.8H5.2Z" fill="#3a1a1a"/><circle cx="7" cy="7" r="1.9" fill="#2a1414"/></svg>
<div class="a " style="left:896px;top:405.5px;width:104px;height:1px;background:#e5e5e5;"></div>
<span class="t" style="left:915.8px;top:408.76px;font-size:12px;line-height:14.4px;color:#222;transform:scaleX(0.853);">MetaROUTER</span>
<svg style="left:897.5px;top:407.9px" width="14" height="14" viewBox="0 0 14 14"><rect x="1" y="1.4" width="7.8" height="7" fill="#3f90e0" stroke="#c8d8e8" stroke-width="1"/><rect x="9.6" y="1.2" width="3.8" height="8" fill="#dfe3e7" stroke="#a8acb0" stroke-width=".6"/><path d="M10.2 3H12.8M10.2 5H12.8M10.2 7H12.8" stroke="#7a9a5a" stroke-width=".8"/><path d="M2 10.2H11.6" stroke="#b8bcc0" stroke-width="1.2"/><path d="M.6 12.6H13" stroke="#cfd3d7" stroke-width="1.4"/></svg>
<div class="a " style="left:896px;top:424.5px;width:104px;height:1px;background:#e5e5e5;"></div>
<span class="t" style="left:915.8px;top:427.76px;font-size:12px;line-height:14.4px;color:#222;transform:scaleX(0.795);">Partition</span>
<svg style="left:897.5px;top:426.9px" width="14" height="14" viewBox="0 0 14 14"><path d="M6.4 6.6V.8A6 6 0 0 0 1.2 9.6Z" fill="#c4222e"/><path d="M7.8 6V.6A6 6 0 0 1 13.4 7.6Z" fill="#2f9f3f"/><path d="M7.2 8L12.8 9.4A6 6 0 0 1 2.6 11.4Z" fill="#2f72c4"/></svg>
<div class="a " style="left:896px;top:443.5px;width:104px;height:1px;background:#e5e5e5;"></div>
<span class="t" style="left:915.8px;top:446.76px;font-size:12px;line-height:14.4px;color:#222;transform:scaleX(0.833);">Make Supout.rif</span>
<svg style="left:897.5px;top:445.9px" width="14" height="14" viewBox="0 0 14 14"><path d="M2.4 .8H9.2L12.6 4.2V13.2H2.4Z" fill="#f7fafd" stroke="#a9bccf" stroke-width="1"/><path d="M9.2 .8V4.2H12.6" fill="#dfe9f3" stroke="#a9bccf" stroke-width=".8"/><path d="M2.6 4.6L7.4 8.6L2.6 12.6Z" fill="#2f82cc"/><path d="M12 8L8.4 10.4L12 12.8Z" fill="#b4d4ee"/></svg>
<div class="a " style="left:896px;top:462.5px;width:104px;height:1px;background:#e5e5e5;"></div>
<span class="t" style="left:915.8px;top:465.76px;font-size:12px;line-height:14.4px;color:#222;transform:scaleX(0.844);">New WinBox</span>
<svg style="left:897.5px;top:464.9px" width="14" height="14" viewBox="0 0 14 14"><circle cx="7" cy="7" r="6.1" fill="#2f66ae" stroke="#1f4a88" stroke-width="1"/><circle cx="7" cy="7" r="4.2" fill="#5c94d8"/><path d="M4.4 5.2A3.6 3.6 0 0 0 9.4 10" stroke="#f0f6ff" stroke-width="1.5" fill="none"/></svg>
<div class="a " style="left:896px;top:481.5px;width:104px;height:1px;background:#e5e5e5;"></div>
<span class="t" style="left:915.8px;top:484.76px;font-size:12px;line-height:14.4px;color:#222;transform:scaleX(0.750);">Exit</span>
<svg style="left:897.5px;top:483.9px" width="14" height="14" viewBox="0 0 14 14"><rect x=".8" y=".8" width="12.4" height="12.4" fill="#9c4818"/><path d="M2 2.4H7.2L4.2 7L7.2 11.6H2Z" fill="#e8801c"/><path d="M12.2 3L7.4 7L12.2 11Z" fill="#3f80c8"/><path d="M.8 .8H13.2V13.2H.8Z" fill="none" stroke="#6c3410" stroke-width=".8"/></svg>
<div class="a " style="left:896px;top:500.5px;width:104px;height:1px;background:#e5e5e5;"></div>
<div class="a " style="left:896px;top:519.5px;width:104px;height:1px;background:#e5e5e5;"></div>
<span class="t" style="left:915.8px;top:522.76px;font-size:12px;line-height:14.4px;color:#222;transform:scaleX(0.842);">Windows</span>
<svg style="left:988px;top:523.7px" width="6" height="10" viewBox="0 0 6 10"><path d="M1 0.3V9.8" stroke="#909090" stroke-width="1"/><path d="M1 0.5L5 3.6L1 6" fill="#fafafa" stroke="#a4a4a4" stroke-width="0.8"/></svg>
<svg style="left:897.5px;top:521.9px" width="14" height="14" viewBox="0 0 14 14"><path d="M1 12.6H13" stroke="#b8c8d8" stroke-width="1"/><rect x="1.2" y="3.6" width="11.6" height="7.4" fill="#58a8ec" stroke="#3a7cc0" stroke-width="1.3"/></svg>
<div class="a " style="left:1002px;top:146px;width:925px;height:347px;background:#f0f0f0;border:1px solid #2c2c2c;box-shadow:inset 1px 1px 0 #fff;"></div>
<div class="a " style="left:1004px;top:148px;width:920px;height:19.5px;background:#c0c0c0;"></div>
<span class="t" style="left:1008px;top:152.26px;font-size:12px;line-height:14.4px;color:#fff;transform:scaleX(0.807);">Bridge</span>
<div class="a " style="left:1004px;top:192.5px;width:920px;height:1px;background:#fff;"></div>
<div class="a " style="left:1008.5px;top:174px;width:39.0px;height:18.5px;background:#dadada;border-right:1px solid #c8c8c8;border-bottom:1px solid #d0d0d0;"></div>
<span class="t" style="left:1010.66px;top:176.76px;font-size:12px;line-height:14.4px;color:#222;transform-origin:50% 0;transform:scaleX(0.807);">Bridge</span>
<div class="a " style="left:1048px;top:169.5px;width:37.5px;height:24px;background:#f0f0f0;border-left:1px solid #fff;border-top:1px solid #fff;border-right:1px solid #a0a0a0;"></div>
<span class="t" style="left:1052.75px;top:174.76px;font-size:12px;line-height:14.4px;color:#222;transform-origin:50% 0;transform:scaleX(0.768);">Ports</span>
<div class="a " style="left:1086.5px;top:174px;width:80.0px;height:18.5px;background:#dadada;border-right:1px solid #c8c8c8;border-bottom:1px solid #d0d0d0;"></div>
<span class="t" style="left:1084.48px;top:176.76px;font-size:12px;line-height:14.4px;color:#222;transform-origin:50% 0;transform:scaleX(0.815);">Port Extensions</span>
<div class="a " style="left:1168px;top:174px;width:43.5px;height:18.5px;background:#dadada;border-right:1px solid #c8c8c8;border-bottom:1px solid #d0d0d0;"></div>
<span class="t" style="left:1171.08px;top:176.76px;font-size:12px;line-height:14.4px;color:#222;transform-origin:50% 0;transform:scaleX(0.830);">VLANs</span>
<div class="a " style="left:1213px;top:174px;width:41px;height:18.5px;background:#dadada;border-right:1px solid #c8c8c8;border-bottom:1px solid #d0d0d0;"></div>
<span class="t" style="left:1216.17px;top:176.76px;font-size:12px;line-height:14.4px;color:#222;transform-origin:50% 0;transform:scaleX(0.837);">MSTIs</span>
<div class="a " style="left:1255.5px;top:174px;width:100.5px;height:18.5px;background:#dadada;border-right:1px solid #c8c8c8;border-bottom:1px solid #d0d0d0;"></div>
<span class="t" style="left:1252.85px;top:176.76px;font-size:12px;line-height:14.4px;color:#222;transform-origin:50% 0;transform:scaleX(0.832);">Port MST Overrides</span>
<div class="a " style="left:1357.5px;top:174px;width:36.5px;height:18.5px;background:#dadada;border-right:1px solid #c8c8c8;border-bottom:1px solid #d0d0d0;"></div>
<span class="t" style="left:1359.42px;top:176.76px;font-size:12px;line-height:14.4px;color:#222;transform-origin:50% 0;transform:scaleX(0.765);">Filters</span>
<div class="a " style="left:1395.5px;top:174px;width:33.5px;height:18.5px;background:#dadada;border-right:1px solid #c8c8c8;border-bottom:1px solid #d0d0d0;"></div>
<span class="t" style="left:1400.70px;top:176.76px;font-size:12px;line-height:14.4px;color:#222;transform-origin:50% 0;transform:scaleX(0.844);">NAT</span>
<div class="a " style="left:1430.5px;top:174px;width:36.5px;height:18.5px;background:#dadada;border-right:1px solid #c8c8c8;border-bottom:1px solid #d0d0d0;"></div>
<span class="t" style="left:1433.41px;top:176.76px;font-size:12px;line-height:14.4px;color:#222;transform-origin:50% 0;transform:scaleX(0.815);">Hosts</span>
<div class="a " style="left:1468.5px;top:174px;width:34.5px;height:18.5px;background:#dadada;border-right:1px solid #c8c8c8;border-bottom:1px solid #d0d0d0;"></div>
<span class="t" style="left:1472.42px;top:176.76px;font-size:12px;line-height:14.4px;color:#222;transform-origin:50% 0;transform:scaleX(0.844);">MDB</span>
<div class="a btn" style="left:1007.3px;top:197.3px;width:20.2px;height:21.5px;"></div>
<div class="a btn" style="left:1030.8px;top:197.3px;width:20.2px;height:21.5px;"></div>
<div class="a btn" style="left:1059.3px;top:197.3px;width:20.2px;height:21.5px;"></div>
<div class="a btn" style="left:1082.8px;top:197.3px;width:20.2px;height:21.5px;"></div>
<div class="a btn" style="left:1110.8px;top:197.3px;width:20.2px;height:21.5px;"></div>
<div class="a btn" style="left:1139.2px;top:197.3px;width:20.2px;height:21.5px;"></div>
<div class="a " style="left:1011.5px;top:202.7px;width:11.6px;height:11.4px;background:#0a0c9c;clip-path:polygon(31% 0,69% 0,69% 32%,100% 32%,100% 68%,69% 68%,69% 100%,31% 100%,31% 68%,0 68%,0 32%,31% 32%);"></div>
<div class="a " style="left:1035.5px;top:206.5px;width:11px;height:3.5px;border:1px solid #b4b4b4;background:#e6e6e6;"></div>
<svg style="left:1064px;top:203px" width="12" height="10" viewBox="0 0 12 10"><path d="M1 5.3L4.2 8.4L10.8 1.2" fill="none" stroke="#c6c6c6" stroke-width="2.4"/><path d="M1 5.3L4.2 8.4L10.8 1.2" fill="none" stroke="#f2f2f2" stroke-width=".9"/></svg>
<svg style="left:1088px;top:202.5px" width="11" height="11" viewBox="0 0 11 11"><path d="M1 1L10 10M10 1L1 10" fill="none" stroke="#c8c8c8" stroke-width="2.2"/><path d="M1 1L10 10M10 1L1 10" fill="none" stroke="#f4f4f4" stroke-width=".8"/></svg>
<svg style="left:1115px;top:203px" width="13" height="10" viewBox="0 0 13 10"><path d="M.8 3.4L3.4 1H11.6V9.2H.8Z" fill="#f4f4f4" stroke="#8e8e8e" stroke-width="1"/><path d="M8 3.2H10M9.6 3.2V4.6" stroke="#b4b4b4" stroke-width=".9" fill="none"/></svg>
<svg style="left:1143.8px;top:202px" width="12" height="12" viewBox="0 0 12 12"><path d="M.9 1.3H11.3L7.4 5.8V11.6L4.9 10.6V5.8Z" fill="#b4bcd4" stroke="#16162e" stroke-width="1.4" stroke-linejoin="round"/><path d="M2.6 2.3H9.6L6.2 5.4Z" fill="#8c98bc"/></svg>
<div class="a " style="left:1007.5px;top:222px;width:915px;height:247.5px;background:#fff;border:1px solid #a0a0a0;border-bottom-color:#b0b0b0;"></div>
<div class="a " style="left:1008.5px;top:223px;width:593px;height:15.5px;background:#f0f0f0;"></div>
<div class="a " style="left:1008.5px;top:223px;width:912px;height:15.5px;background:#f0f0f0;border-bottom:1px solid #bcbcbc;box-shadow:0 1px 0 #dcdcdc;"></div>
<div class="a " style="left:1030px;top:223px;width:1px;height:15px;background:#c8c8c8;"></div>
<div class="a " style="left:1030px;top:239px;width:1px;height:99px;background:#e6e6e6;"></div>
<div class="a " style="left:1062.5px;top:223px;width:1px;height:15px;background:#c8c8c8;"></div>
<div class="a " style="left:1062.5px;top:239px;width:1px;height:99px;background:#e6e6e6;"></div>
<div class="a " style="left:1157px;top:223px;width:1px;height:15px;background:#c8c8c8;"></div>
<div class="a " style="left:1157px;top:239px;width:1px;height:99px;background:#e6e6e6;"></div>
<div class="a " style="left:1251px;top:223px;width:1px;height:15px;background:#c8c8c8;"></div>
<div class="a " style="left:1251px;top:239px;width:1px;height:99px;background:#e6e6e6;"></div>
<div class="a " style="left:1294px;top:223px;width:1px;height:15px;background:#c8c8c8;"></div>
<div class="a " style="left:1294px;top:239px;width:1px;height:99px;background:#e6e6e6;"></div>
<div class="a " style="left:1337px;top:223px;width:1px;height:15px;background:#c8c8c8;"></div>
<div class="a " style="left:1337px;top:239px;width:1px;height:99px;background:#e6e6e6;"></div>
<div class="a " style="left:1393px;top:223px;width:1px;height:15px;background:#c8c8c8;"></div>
<div class="a " style="left:1393px;top:239px;width:1px;height:99px;background:#e6e6e6;"></div>
<div class="a " style="left:1450px;top:223px;width:1px;height:15px;background:#c8c8c8;"></div>
<div class="a " style="left:1450px;top:239px;width:1px;height:99px;background:#e6e6e6;"></div>
<div class="a " style="left:1545px;top:223px;width:1px;height:15px;background:#c8c8c8;"></div>
<div class="a " style="left:1545px;top:239px;width:1px;height:99px;background:#e6e6e6;"></div>
<div class="a " style="left:1601.5px;top:223px;width:1px;height:15px;background:#c8c8c8;"></div>
<div class="a " style="left:1601.5px;top:239px;width:1px;height:99px;background:#e6e6e6;"></div>
<span class="t" style="left:1015.3px;top:224.76px;font-size:12px;line-height:14.4px;color:#222;transform:scaleX(1.049);">#</span>
<span class="t" style="left:1065px;top:224.76px;font-size:12px;line-height:14.4px;color:#222;transform:scaleX(0.846);">Interface</span>
<span class="t" style="left:1159.5px;top:224.76px;font-size:12px;line-height:14.4px;color:#222;transform:scaleX(0.807);">Bridge</span>
<span class="t" style="left:1254px;top:224.76px;font-size:12px;line-height:14.4px;color:#222;transform:scaleX(0.822);">Horizon</span>
<span class="t" style="left:1297px;top:224.76px;font-size:12px;line-height:14.4px;color:#222;transform:scaleX(0.833);">Trusted</span>
<span class="t" style="left:1339.5px;top:224.76px;font-size:12px;line-height:14.4px;color:#222;transform:scaleX(0.799);">Priority (h...</span>
<span class="t" style="left:1396.5px;top:224.76px;font-size:12px;line-height:14.4px;color:#222;transform:scaleX(0.816);">Path Cost</span>
<span class="t" style="left:1453px;top:224.76px;font-size:12px;line-height:14.4px;color:#222;transform:scaleX(0.790);">Role</span>
<span class="t" style="left:1548px;top:224.76px;font-size:12px;line-height:14.4px;color:#222;transform:scaleX(0.829);">Root Pat...</span>
<div class="a " style="left:1008.5px;top:253px;width:912px;height:1px;background:#e4e4e4;"></div>
<div class="a " style="left:1008.5px;top:267px;width:912px;height:1px;background:#e4e4e4;"></div>
<div class="a " style="left:1008.5px;top:281px;width:912px;height:1px;background:#e4e4e4;"></div>
<div class="a " style="left:1008.5px;top:295px;width:912px;height:1px;background:#e4e4e4;"></div>
<div class="a " style="left:1008.5px;top:310px;width:912px;height:1px;background:#e4e4e4;"></div>
<div class="a " style="left:1008.5px;top:324px;width:912px;height:1px;background:#e4e4e4;"></div>
<div class="a " style="left:1008.5px;top:338px;width:912px;height:1px;background:#e4e4e4;"></div>
<span class="t" style="left:1020.83px;top:238.66px;font-size:12px;line-height:14.4px;color:#1a1a1a;transform-origin:100% 0;transform:scaleX(0.899);">0</span>
<svg style="left:1064.5px;top:239.9px" width="12.2" height="10.5" viewBox="0 0 12.2 10.5"><circle cx="3.7" cy="2.7" r="2.6" fill="#3a7cc0"/><circle cx="8.3" cy="2.7" r="2.6" fill="#3a7cc0"/><path d="M0 9.6C0 6 1.6 4.9 3.8 4.9H8.2C10.4 4.9 12 6 12 9.6C12 10.2 11.6 10.4 11 10.4H1C.4 10.4 0 10.2 0 9.6Z" fill="#4a90d4"/><path d="M.2 9.4H11.8V9.8C11.8 10.2 11.5 10.4 11 10.4H1C.5 10.4 .2 10.2 .2 9.8Z" fill="#2f6cb0"/></svg>
<span class="t" style="left:1079.5px;top:238.66px;font-size:12px;line-height:14.4px;color:#1a1a1a;transform:scaleX(0.829);">wlan1</span>
<span class="t" style="left:1158.5px;top:238.66px;font-size:12px;line-height:14.4px;color:#1a1a1a;transform:scaleX(0.837);">bridge1</span>
<span class="t" style="left:1296.5px;top:238.66px;font-size:12px;line-height:14.4px;color:#1a1a1a;transform:scaleX(0.787);">no</span>
<span class="t" style="left:1377.65px;top:238.66px;font-size:12px;line-height:14.4px;color:#1a1a1a;transform-origin:100% 0;transform:scaleX(0.824);">80</span>
<span class="t" style="left:1434.65px;top:238.66px;font-size:12px;line-height:14.4px;color:#1a1a1a;transform-origin:100% 0;transform:scaleX(0.824);">10</span>
<span class="t" style="left:1452.5px;top:238.66px;font-size:12px;line-height:14.4px;color:#1a1a1a;transform:scaleX(0.834);">designated port</span>
<span class="t" style="left:1020.83px;top:252.93px;font-size:12px;line-height:14.4px;color:#1a1a1a;transform-origin:100% 0;transform:scaleX(0.899);">1</span>
<svg style="left:1064.5px;top:254.2px" width="12.2" height="10.5" viewBox="0 0 12.2 10.5"><circle cx="3.7" cy="2.7" r="2.6" fill="#3a7cc0"/><circle cx="8.3" cy="2.7" r="2.6" fill="#3a7cc0"/><path d="M0 9.6C0 6 1.6 4.9 3.8 4.9H8.2C10.4 4.9 12 6 12 9.6C12 10.2 11.6 10.4 11 10.4H1C.4 10.4 0 10.2 0 9.6Z" fill="#4a90d4"/><path d="M.2 9.4H11.8V9.8C11.8 10.2 11.5 10.4 11 10.4H1C.5 10.4 .2 10.2 .2 9.8Z" fill="#2f6cb0"/></svg>
<span class="t" style="left:1079.5px;top:252.93px;font-size:12px;line-height:14.4px;color:#1a1a1a;transform:scaleX(0.836);">LAN_bridge</span>
<span class="t" style="left:1158.5px;top:252.93px;font-size:12px;line-height:14.4px;color:#1a1a1a;transform:scaleX(0.837);">bridge1</span>
<span class="t" style="left:1296.5px;top:252.93px;font-size:12px;line-height:14.4px;color:#1a1a1a;transform:scaleX(0.787);">no</span>
<span class="t" style="left:1377.65px;top:252.93px;font-size:12px;line-height:14.4px;color:#1a1a1a;transform-origin:100% 0;transform:scaleX(0.824);">80</span>
<span class="t" style="left:1434.65px;top:252.93px;font-size:12px;line-height:14.4px;color:#1a1a1a;transform-origin:100% 0;transform:scaleX(0.824);">10</span>
<span class="t" style="left:1020.83px;top:267.20px;font-size:12px;line-height:14.4px;color:#1a1a1a;transform-origin:100% 0;transform:scaleX(0.899);">2</span>
<span class="t" style="left:1032.5px;top:267.20px;font-size:12px;line-height:14.4px;color:#1a1a1a;transform:scaleX(0.837);">DH</span>
<svg style="left:1064.5px;top:268.4px" width="12.2" height="10.5" viewBox="0 0 12.2 10.5"><circle cx="3.7" cy="2.7" r="2.6" fill="#3a7cc0"/><circle cx="8.3" cy="2.7" r="2.6" fill="#3a7cc0"/><path d="M0 9.6C0 6 1.6 4.9 3.8 4.9H8.2C10.4 4.9 12 6 12 9.6C12 10.2 11.6 10.4 11 10.4H1C.4 10.4 0 10.2 0 9.6Z" fill="#4a90d4"/><path d="M.2 9.4H11.8V9.8C11.8 10.2 11.5 10.4 11 10.4H1C.5 10.4 .2 10.2 .2 9.8Z" fill="#2f6cb0"/></svg>
<span class="t" style="left:1079.5px;top:267.20px;font-size:12px;line-height:14.4px;color:#1a1a1a;transform:scaleX(0.819);">eth3-lan</span>
<span class="t" style="left:1158.5px;top:267.20px;font-size:12px;line-height:14.4px;color:#1a1a1a;transform:scaleX(0.837);">bridge1</span>
<span class="t" style="left:1296.5px;top:267.20px;font-size:12px;line-height:14.4px;color:#1a1a1a;transform:scaleX(0.787);">no</span>
<span class="t" style="left:1377.65px;top:267.20px;font-size:12px;line-height:14.4px;color:#1a1a1a;transform-origin:100% 0;transform:scaleX(0.824);">80</span>
<span class="t" style="left:1434.65px;top:267.20px;font-size:12px;line-height:14.4px;color:#1a1a1a;transform-origin:100% 0;transform:scaleX(0.824);">10</span>
<span class="t" style="left:1452.5px;top:267.20px;font-size:12px;line-height:14.4px;color:#1a1a1a;transform:scaleX(0.834);">designated port</span>
<span class="t" style="left:1020.83px;top:281.47px;font-size:12px;line-height:14.4px;color:#1a1a1a;transform-origin:100% 0;transform:scaleX(0.899);">3</span>
<span class="t" style="left:1032.5px;top:281.47px;font-size:12px;line-height:14.4px;color:#1a1a1a;transform:scaleX(0.837);">DH</span>
<svg style="left:1064.5px;top:282.7px" width="12.2" height="10.5" viewBox="0 0 12.2 10.5"><circle cx="3.7" cy="2.7" r="2.6" fill="#3a7cc0"/><circle cx="8.3" cy="2.7" r="2.6" fill="#3a7cc0"/><path d="M0 9.6C0 6 1.6 4.9 3.8 4.9H8.2C10.4 4.9 12 6 12 9.6C12 10.2 11.6 10.4 11 10.4H1C.4 10.4 0 10.2 0 9.6Z" fill="#4a90d4"/><path d="M.2 9.4H11.8V9.8C11.8 10.2 11.5 10.4 11 10.4H1C.5 10.4 .2 10.2 .2 9.8Z" fill="#2f6cb0"/></svg>
<span class="t" style="left:1079.5px;top:281.47px;font-size:12px;line-height:14.4px;color:#1a1a1a;transform:scaleX(0.819);">eth4-lan</span>
<span class="t" style="left:1158.5px;top:281.47px;font-size:12px;line-height:14.4px;color:#1a1a1a;transform:scaleX(0.837);">bridge1</span>
<span class="t" style="left:1296.5px;top:281.47px;font-size:12px;line-height:14.4px;color:#1a1a1a;transform:scaleX(0.787);">no</span>
<span class="t" style="left:1377.65px;top:281.47px;font-size:12px;line-height:14.4px;color:#1a1a1a;transform-origin:100% 0;transform:scaleX(0.824);">80</span>
<span class="t" style="left:1434.65px;top:281.47px;font-size:12px;line-height:14.4px;color:#1a1a1a;transform-origin:100% 0;transform:scaleX(0.824);">10</span>
<span class="t" style="left:1452.5px;top:281.47px;font-size:12px;line-height:14.4px;color:#1a1a1a;transform:scaleX(0.834);">designated port</span>
<span class="t" style="left:1020.83px;top:295.74px;font-size:12px;line-height:14.4px;color:#1a1a1a;transform-origin:100% 0;transform:scaleX(0.899);">4</span>
<span class="t" style="left:1032.5px;top:295.74px;font-size:12px;line-height:14.4px;color:#1a1a1a;transform:scaleX(0.837);">DH</span>
<svg style="left:1064.5px;top:297.0px" width="12.2" height="10.5" viewBox="0 0 12.2 10.5"><circle cx="3.7" cy="2.7" r="2.6" fill="#3a7cc0"/><circle cx="8.3" cy="2.7" r="2.6" fill="#3a7cc0"/><path d="M0 9.6C0 6 1.6 4.9 3.8 4.9H8.2C10.4 4.9 12 6 12 9.6C12 10.2 11.6 10.4 11 10.4H1C.4 10.4 0 10.2 0 9.6Z" fill="#4a90d4"/><path d="M.2 9.4H11.8V9.8C11.8 10.2 11.5 10.4 11 10.4H1C.5 10.4 .2 10.2 .2 9.8Z" fill="#2f6cb0"/></svg>
<span class="t" style="left:1079.5px;top:295.74px;font-size:12px;line-height:14.4px;color:#1a1a1a;transform:scaleX(0.819);">eth5-lan</span>
<span class="t" style="left:1158.5px;top:295.74px;font-size:12px;line-height:14.4px;color:#1a1a1a;transform:scaleX(0.837);">bridge1</span>
<span class="t" style="left:1296.5px;top:295.74px;font-size:12px;line-height:14.4px;color:#1a1a1a;transform:scaleX(0.787);">no</span>
<span class="t" style="left:1377.65px;top:295.74px;font-size:12px;line-height:14.4px;color:#1a1a1a;transform-origin:100% 0;transform:scaleX(0.824);">80</span>
<span class="t" style="left:1434.65px;top:295.74px;font-size:12px;line-height:14.4px;color:#1a1a1a;transform-origin:100% 0;transform:scaleX(0.824);">10</span>
<span class="t" style="left:1452.5px;top:295.74px;font-size:12px;line-height:14.4px;color:#1a1a1a;transform:scaleX(0.834);">designated port</span>
<span class="t" style="left:1020.83px;top:310.01px;font-size:12px;line-height:14.4px;color:#1a1a1a;transform-origin:100% 0;transform:scaleX(0.899);">5</span>
<svg style="left:1064.5px;top:311.2px" width="12.2" height="10.5" viewBox="0 0 12.2 10.5"><circle cx="3.7" cy="2.7" r="2.6" fill="#3a7cc0"/><circle cx="8.3" cy="2.7" r="2.6" fill="#3a7cc0"/><path d="M0 9.6C0 6 1.6 4.9 3.8 4.9H8.2C10.4 4.9 12 6 12 9.6C12 10.2 11.6 10.4 11 10.4H1C.4 10.4 0 10.2 0 9.6Z" fill="#4a90d4"/><path d="M.2 9.4H11.8V9.8C11.8 10.2 11.5 10.4 11 10.4H1C.5 10.4 .2 10.2 .2 9.8Z" fill="#2f6cb0"/></svg>
<span class="t" style="left:1079.5px;top:310.01px;font-size:12px;line-height:14.4px;color:#1a1a1a;transform:scaleX(0.817);">CAM_bridge</span>
<span class="t" style="left:1158.5px;top:310.01px;font-size:12px;line-height:14.4px;color:#1a1a1a;transform:scaleX(0.837);">bridge_cam</span>
<span class="t" style="left:1296.5px;top:310.01px;font-size:12px;line-height:14.4px;color:#1a1a1a;transform:scaleX(0.787);">no</span>
<span class="t" style="left:1377.65px;top:310.01px;font-size:12px;line-height:14.4px;color:#1a1a1a;transform-origin:100% 0;transform:scaleX(0.824);">80</span>
<span class="t" style="left:1434.65px;top:310.01px;font-size:12px;line-height:14.4px;color:#1a1a1a;transform-origin:100% 0;transform:scaleX(0.824);">10</span>
<span class="t" style="left:1020.83px;top:324.28px;font-size:12px;line-height:14.4px;color:#1a1a1a;transform-origin:100% 0;transform:scaleX(0.899);">6</span>
<span class="t" style="left:1032.5px;top:324.28px;font-size:12px;line-height:14.4px;color:#1a1a1a;transform:scaleX(0.808);">D</span>
<svg style="left:1064.5px;top:325.5px" width="12.2" height="10.5" viewBox="0 0 12.2 10.5"><circle cx="3.7" cy="2.7" r="2.6" fill="#3a7cc0"/><circle cx="8.3" cy="2.7" r="2.6" fill="#3a7cc0"/><path d="M0 9.6C0 6 1.6 4.9 3.8 4.9H8.2C10.4 4.9 12 6 12 9.6C12 10.2 11.6 10.4 11 10.4H1C.4 10.4 0 10.2 0 9.6Z" fill="#4a90d4"/><path d="M.2 9.4H11.8V9.8C11.8 10.2 11.5 10.4 11 10.4H1C.5 10.4 .2 10.2 .2 9.8Z" fill="#2f6cb0"/></svg>
<span class="t" style="left:1079.5px;top:324.28px;font-size:12px;line-height:14.4px;color:#1a1a1a;transform:scaleX(0.830);">eth2-cam</span>
<span class="t" style="left:1158.5px;top:324.28px;font-size:12px;line-height:14.4px;color:#1a1a1a;transform:scaleX(0.837);">bridge_cam</span>
<span class="t" style="left:1296.5px;top:324.28px;font-size:12px;line-height:14.4px;color:#1a1a1a;transform:scaleX(0.787);">no</span>
<span class="t" style="left:1377.65px;top:324.28px;font-size:12px;line-height:14.4px;color:#1a1a1a;transform-origin:100% 0;transform:scaleX(0.824);">80</span>
<span class="t" style="left:1434.65px;top:324.28px;font-size:12px;line-height:14.4px;color:#1a1a1a;transform-origin:100% 0;transform:scaleX(0.824);">10</span>
<span class="t" style="left:1452.5px;top:324.28px;font-size:12px;line-height:14.4px;color:#1a1a1a;transform:scaleX(0.834);">designated port</span>
<div class="a " style="left:1007.5px;top:469.5px;width:915px;height:19.5px;background:#f0f0f0;border:1px solid #cdcdcd;border-top:0;"></div>
<span class="t" style="left:1010px;top:471.56px;font-size:12px;line-height:14.4px;color:#222;transform:scaleX(0.776);">7 items</span>
<div class="a " style="left:1002px;top:492px;width:421px;height:3px;background:#3a3a3a;"></div>
<div class="a " style="left:1008px;top:494px;width:414.5px;height:322px;background:#f0f0f0;border:1px solid #2c2c2c;border-bottom:2px solid #383838;box-shadow:inset 1px 1px 0 #fff;"></div>
<div class="a " style="left:1009.5px;top:496px;width:411px;height:19.6px;background:#c0c0c0;"></div>
<span class="t" style="left:1013.5px;top:501.26px;font-size:12px;line-height:14.4px;color:#fff;transform:scaleX(0.842);">Packet Sniffer Settings</span>
<div class="a " style="left:1388px;top:499.5px;width:13.5px;height:13.5px;background:#f0f0f0;border:1px solid #fff;border-right-color:#707070;border-bottom-color:#707070;"></div>
<div class="a " style="left:1390.5px;top:501.5px;width:8.5px;height:9px;border:1px solid #333;border-top-width:2px;"></div>
<div class="a " style="left:1404.5px;top:499.5px;width:13.5px;height:13.5px;background:#f0f0f0;border:1px solid #fff;border-right-color:#707070;border-bottom-color:#707070;"></div>
<svg style="left:1407.3px;top:502.3px" width="8" height="8" viewBox="0 0 8 8"><path d="M0.7 0.7L7.3 7.3M7.3 0.7L0.7 7.3" stroke="#222" stroke-width="1.9"/></svg>
<div class="a " style="left:1010px;top:541.6px;width:315.5px;height:1px;background:#fff;"></div>
<div class="a " style="left:1014px;top:522px;width:47.5px;height:19.6px;background:#dadada;border-right:1px solid #c8c8c8;"></div>
<span class="t" style="left:1016.35px;top:525.46px;font-size:12px;line-height:14.4px;color:#222;transform-origin:50% 0;transform:scaleX(0.820);">General</span>
<div class="a " style="left:1062px;top:522px;width:56.5px;height:19.6px;background:#dadada;border-right:1px solid #c8c8c8;"></div>
<span class="t" style="left:1063.15px;top:525.46px;font-size:12px;line-height:14.4px;color:#222;transform-origin:50% 0;transform:scaleX(0.805);">Streaming</span>
<div class="a " style="left:1119px;top:517.5px;width:35.5px;height:25.5px;background:#f0f0f0;border-left:1px solid #fff;border-top:1px solid #fff;border-right:1px solid #a0a0a0;"></div>
<span class="t" style="left:1123.17px;top:523.26px;font-size:12px;line-height:14.4px;color:#222;transform-origin:50% 0;transform:scaleX(0.769);">Filter</span>
<div class="a " style="left:1325px;top:542px;width:1px;height:248px;background:#a8a8a8;"></div>
<div class="a " style="left:1326px;top:542px;width:1px;height:248px;background:#fff;"></div>
<div class="a " style="left:1010px;top:789px;width:316px;height:1px;background:#a8a8a8;"></div>
<div class="a " style="left:1010px;top:790px;width:316px;height:1px;background:#fff;"></div>
<span class="t" style="left:1032.27px;top:550.66px;font-size:12px;line-height:14.4px;color:#222;transform-origin:100% 0;transform:scaleX(0.839);">Interfaces:</span>
<div class="a inp" style="left:1092.5px;top:550px;width:191.5px;height:15px;"></div>
<span class="t" style="left:1095px;top:550.86px;font-size:12px;line-height:14.4px;color:#222;transform:scaleX(0.791);">all</span>
<div class="a btn" style="left:1285.5px;top:550px;width:15.5px;height:15px;"></div>
<svg style="left:1289px;top:554px" width="9" height="8" viewBox="0 0 9 8"><path d="M1 0.5H8M4.5 7L8.2 2.8H5.6V1.6H3.4V2.8H0.8Z" stroke="#111" stroke-width="1" fill="#111"/></svg>
<svg style="left:1306.9px;top:551.2px" width="9.2" height="11.6" viewBox="0 0 10 12.5"><path d="M5 0L10 5H0Z M5 12.5L10 7.5H0Z" fill="#111"/></svg>
<span class="t" style="left:1011.61px;top:572.46px;font-size:12px;line-height:14.4px;color:#222;transform-origin:100% 0;transform:scaleX(0.815);">MAC Address:</span>
<div class="a inpd" style="left:1092.5px;top:571px;width:208.5px;height:15px;"></div>
<svg style="left:1306.9px;top:573.0px" width="9.2" height="11.6" viewBox="0 0 10 12.5"><path d="M5 0L10 5H0Z" fill="#a8a8a8"/><path d="M5 12.5L10 7.5H0Z" fill="#111"/></svg>
<span class="t" style="left:1010.94px;top:594.26px;font-size:12px;line-height:14.4px;color:#222;transform-origin:100% 0;transform:scaleX(0.827);">MAC Protocol:</span>
<div class="a inpd" style="left:1092.5px;top:593px;width:208.5px;height:15px;"></div>
<svg style="left:1306.9px;top:594.8px" width="9.2" height="11.6" viewBox="0 0 10 12.5"><path d="M5 0L10 5H0Z" fill="#a8a8a8"/><path d="M5 12.5L10 7.5H0Z" fill="#111"/></svg>
<span class="t" style="left:1027.15px;top:616.06px;font-size:12px;line-height:14.4px;color:#222;transform-origin:100% 0;transform:scaleX(0.842);">IP Address:</span>
<div class="a " style="left:1092.5px;top:617px;width:11.5px;height:11px;background:#fff;border:1px solid #a0a0a0;"></div>
<div class="a inp" style="left:1110px;top:615px;width:191px;height:15px;"></div>
<span class="t" style="left:1113px;top:616.26px;font-size:12px;line-height:14.4px;color:#222;transform:scaleX(0.836);">192.168.1.2</span>
<svg style="left:1306.9px;top:616.6px" width="9.2" height="11.6" viewBox="0 0 10 12.5"><path d="M5 0L10 5H0Z M5 12.5L10 7.5H0Z" fill="#111"/></svg>
<span class="t" style="left:1014.26px;top:637.86px;font-size:12px;line-height:14.4px;color:#222;transform-origin:100% 0;transform:scaleX(0.851);">IPv6 Address:</span>
<div class="a inpd" style="left:1092.5px;top:637px;width:208.5px;height:15px;"></div>
<svg style="left:1306.9px;top:638.4px" width="9.2" height="11.6" viewBox="0 0 10 12.5"><path d="M5 0L10 5H0Z" fill="#a8a8a8"/><path d="M5 12.5L10 7.5H0Z" fill="#111"/></svg>
<span class="t" style="left:1026.49px;top:659.66px;font-size:12px;line-height:14.4px;color:#222;transform-origin:100% 0;transform:scaleX(0.849);">IP Protocol:</span>
<div class="a inpd" style="left:1092.5px;top:659px;width:208.5px;height:15px;"></div>
<svg style="left:1306.9px;top:660.2px" width="9.2" height="11.6" viewBox="0 0 10 12.5"><path d="M5 0L10 5H0Z" fill="#a8a8a8"/><path d="M5 12.5L10 7.5H0Z" fill="#111"/></svg>
<span class="t" style="left:1062.96px;top:681.46px;font-size:12px;line-height:14.4px;color:#222;transform-origin:100% 0;transform:scaleX(0.809);">Port:</span>
<div class="a inpd" style="left:1092.5px;top:680px;width:208.5px;height:15px;"></div>
<svg style="left:1306.9px;top:682.0px" width="9.2" height="11.6" viewBox="0 0 10 12.5"><path d="M5 0L10 5H0Z" fill="#a8a8a8"/><path d="M5 12.5L10 7.5H0Z" fill="#111"/></svg>
<span class="t" style="left:1059.63px;top:703.26px;font-size:12px;line-height:14.4px;color:#222;transform-origin:100% 0;transform:scaleX(0.837);">CPU:</span>
<div class="a inpd" style="left:1092.5px;top:702px;width:208.5px;height:15px;"></div>
<svg style="left:1306.9px;top:703.8px" width="9.2" height="11.6" viewBox="0 0 10 12.5"><path d="M5 0L10 5H0Z" fill="#a8a8a8"/><path d="M5 12.5L10 7.5H0Z" fill="#111"/></svg>
<span class="t" style="left:1037.62px;top:725.06px;font-size:12px;line-height:14.4px;color:#222;transform-origin:100% 0;transform:scaleX(0.839);">Direction:</span>
<div class="a inp" style="left:1092.5px;top:724px;width:208.5px;height:15px;"></div>
<span class="t" style="left:1095px;top:725.26px;font-size:12px;line-height:14.4px;color:#222;transform:scaleX(0.801);">any</span>
<div class="a btn" style="left:1303px;top:724px;width:15.5px;height:15px;"></div>
<svg style="left:1306.5px;top:728px" width="9" height="8" viewBox="0 0 9 8"><path d="M1 0.5H8M4.5 7L8.2 2.8H5.6V1.6H3.4V2.8H0.8Z" stroke="#111" stroke-width="1" fill="#111"/></svg>
<span class="t" style="left:1002.27px;top:746.86px;font-size:12px;line-height:14.4px;color:#222;transform-origin:100% 0;transform:scaleX(0.819);">Filter Operation:</span>
<div class="a inp" style="left:1092.5px;top:746px;width:208.5px;height:15px;"></div>
<span class="t" style="left:1095px;top:747.06px;font-size:12px;line-height:14.4px;color:#222;transform:scaleX(0.797);">or</span>
<div class="a btn" style="left:1303px;top:746px;width:15.5px;height:15px;"></div>
<svg style="left:1306.5px;top:750px" width="9" height="8" viewBox="0 0 9 8"><path d="M1 0.5H8M4.5 7L8.2 2.8H5.6V1.6H3.4V2.8H0.8Z" stroke="#111" stroke-width="1" fill="#111"/></svg>
<div class="a " style="left:1335.4px;top:522.4px;width:77.3px;height:20.8px;background:#f0f0f0;border:1px solid #2a2a2a;box-shadow:inset 1px 1px 0 #fff,inset -1px -1px 0 #a0a0a0;"></div>
<span class="t" style="left:1365.53px;top:526.36px;font-size:12px;line-height:14.4px;color:#222;transform-origin:50% 0;transform:scaleX(0.779);">OK</span>
<div class="a btn" style="left:1335.4px;top:547.3px;width:77.3px;height:20.8px;"></div>
<span class="t" style="left:1355.52px;top:551.26px;font-size:12px;line-height:14.4px;color:#222;transform-origin:50% 0;transform:scaleX(0.830);">Cancel</span>
<div class="a btn" style="left:1335.4px;top:571.7px;width:77.3px;height:20.8px;"></div>
<span class="t" style="left:1359.19px;top:575.66px;font-size:12px;line-height:14.4px;color:#222;transform-origin:50% 0;transform:scaleX(0.800);">Apply</span>
<div class="a btn" style="left:1335.4px;top:600.8px;width:77.3px;height:20.8px;"></div>
<span class="t" style="left:1361.53px;top:604.76px;font-size:12px;line-height:14.4px;color:#222;transform-origin:50% 0;transform:scaleX(0.809);">Start</span>
<div class="a btn" style="left:1335.4px;top:625.4px;width:77.3px;height:20.8px;"></div>
<span class="t" style="left:1361.86px;top:629.36px;font-size:12px;line-height:14.4px;color:#222;transform-origin:50% 0;transform:scaleX(0.790);">Stop</span>
<div class="a btn" style="left:1335.4px;top:654.8px;width:77.3px;height:20.8px;"></div>
<span class="t" style="left:1352.86px;top:658.76px;font-size:12px;line-height:14.4px;color:#222;transform-origin:50% 0;transform:scaleX(0.855);">Packets</span>
<div class="a btn" style="left:1335.4px;top:679.4px;width:77.3px;height:20.8px;"></div>
<span class="t" style="left:1340.85px;top:683.36px;font-size:12px;line-height:14.4px;color:#222;transform-origin:50% 0;transform:scaleX(0.839);">Connections</span>
<div class="a btn" style="left:1335.4px;top:704px;width:77.3px;height:20.8px;"></div>
<span class="t" style="left:1358.86px;top:707.96px;font-size:12px;line-height:14.4px;color:#222;transform-origin:50% 0;transform:scaleX(0.815);">Hosts</span>
<div class="a btn" style="left:1335.4px;top:728.4px;width:77.3px;height:20.8px;"></div>
<span class="t" style="left:1349.19px;top:732.36px;font-size:12px;line-height:14.4px;color:#222;transform-origin:50% 0;transform:scaleX(0.830);">Protocols</span>
<div class="a " style="left:1010.5px;top:793.5px;width:406.5px;height:18px;background:#f0f0f0;border:1px solid #b0b0b0;border-right-color:#e4e4e4;border-bottom-color:#e4e4e4;"></div>
<span class="t" style="left:1013px;top:795.56px;font-size:12px;line-height:14.4px;color:#222;transform:scaleX(0.843);">stopped</span>
<div class="a " style="left:1422.5px;top:435.5px;width:505px;height:380.5px;background:#f0f0f0;border:1px solid #2c2c4c;border-bottom:2px solid #383838;"></div>
<div class="a " style="left:1423.5px;top:436.5px;width:500px;height:20.5px;background:#5052c8;border-top:1px solid #8c8ce0;border-left:1px solid #8c8ce0;"></div>
<span class="t" style="left:1428.5px;top:442.26px;font-size:12px;line-height:14.4px;color:#fff;transform:scaleX(0.855);">Packet Sniffer Packets</span>
<div class="a " style="left:1425.7px;top:459.7px;width:20.3px;height:21.8px;background:#dadada;"></div>
<svg style="left:1429.8px;top:465.8px" width="12" height="12" viewBox="0 0 12 12"><path d="M.9 1.3H11.3L7.4 5.8V11.6L4.9 10.6V5.8Z" fill="#b4bcd4" stroke="#16162e" stroke-width="1.4" stroke-linejoin="round"/><path d="M2.6 2.3H9.6L6.2 5.4Z" fill="#8c98bc"/></svg>
<div class="a " style="left:1424px;top:485px;width:500px;height:1px;background:#b4b4b4;"></div>
<div class="a " style="left:1424px;top:486px;width:500px;height:1px;background:#fff;"></div>
<div class="a inp" style="left:1427px;top:492px;width:89.5px;height:15.5px;"></div>
<span class="t" style="left:1430px;top:493.26px;font-size:12px;line-height:14.4px;color:#222;transform:scaleX(0.782);">Time</span>
<div class="a btn" style="left:1518px;top:492px;width:15.5px;height:15.5px;"></div>
<svg style="left:1521.5px;top:496px" width="9" height="8" viewBox="0 0 9 8"><path d="M1 0.5H8M4.5 7L8.2 2.8H5.6V1.6H3.4V2.8H0.8Z" stroke="#111" stroke-width="1" fill="#111"/></svg>
<div class="a inp" style="left:1541px;top:492px;width:32px;height:15.5px;"></div>
<span class="t" style="left:1544px;top:493.26px;font-size:12px;line-height:14.4px;color:#222;transform:scaleX(0.750);">is</span>
<div class="a btn" style="left:1575.5px;top:492px;width:15.5px;height:15.5px;"></div>
<svg style="left:1579px;top:496px" width="9" height="8" viewBox="0 0 9 8"><path d="M1 0.5H8M4.5 7L8.2 2.8H5.6V1.6H3.4V2.8H0.8Z" stroke="#111" stroke-width="1" fill="#111"/></svg>
<div class="a inp" style="left:1598px;top:492px;width:330px;height:15.5px;"></div>
<div class="a " style="left:1426px;top:516.5px;width:500px;height:275.5px;background:#fff;border:1px solid #b0b0b0;border-top-color:#a0a0a0;overflow:hidden;"></div>
<div class="a " style="left:1427.5px;top:517.5px;width:495px;height:15px;background:#f0f0f0;border-bottom:1px solid #bcbcbc;"></div>
<div class="a " style="left:1473px;top:517.5px;width:1px;height:15px;background:#c8c8c8;"></div>
<div class="a " style="left:1473px;top:533px;width:1px;height:258px;background:#e6e6e6;"></div>
<div class="a " style="left:1569px;top:517.5px;width:1px;height:15px;background:#c8c8c8;"></div>
<div class="a " style="left:1569px;top:533px;width:1px;height:258px;background:#e6e6e6;"></div>
<div class="a " style="left:1616.5px;top:517.5px;width:1px;height:15px;background:#c8c8c8;"></div>
<div class="a " style="left:1616.5px;top:533px;width:1px;height:258px;background:#e6e6e6;"></div>
<div class="a " style="left:1720px;top:517.5px;width:1px;height:15px;background:#c8c8c8;"></div>
<div class="a " style="left:1720px;top:533px;width:1px;height:258px;background:#e6e6e6;"></div>
<div class="a " style="left:1768px;top:517.5px;width:1px;height:15px;background:#c8c8c8;"></div>
<div class="a " style="left:1768px;top:533px;width:1px;height:258px;background:#e6e6e6;"></div>
<div class="a " style="left:1872px;top:517.5px;width:1px;height:15px;background:#c8c8c8;"></div>
<div class="a " style="left:1872px;top:533px;width:1px;height:258px;background:#e6e6e6;"></div>
<div class="a " style="left:1918.5px;top:517.5px;width:1px;height:15px;background:#c8c8c8;"></div>
<div class="a " style="left:1918.5px;top:533px;width:1px;height:258px;background:#e6e6e6;"></div>
<span class="t" style="left:1429px;top:518.76px;font-size:12px;line-height:14.4px;color:#222;transform:scaleX(0.814);">Time...</span>
<span class="t" style="left:1476px;top:518.76px;font-size:12px;line-height:14.4px;color:#222;transform:scaleX(0.846);">Interface</span>
<span class="t" style="left:1571.5px;top:518.76px;font-size:12px;line-height:14.4px;color:#222;transform:scaleX(0.834);">Direction</span>
<span class="t" style="left:1619.5px;top:518.76px;font-size:12px;line-height:14.4px;color:#222;transform:scaleX(0.823);">Src. Address</span>
<span class="t" style="left:1723px;top:518.76px;font-size:12px;line-height:14.4px;color:#222;transform:scaleX(0.814);">Src. Port</span>
<span class="t" style="left:1770.5px;top:518.76px;font-size:12px;line-height:14.4px;color:#222;transform:scaleX(0.831);">Dst. Address</span>
<span class="t" style="left:1874.5px;top:518.76px;font-size:12px;line-height:14.4px;color:#222;transform:scaleX(0.814);">Dst. Port</span>
<svg style="left:1463.5px;top:520.5px" width="5" height="6" viewBox="0 0 5 6"><path d="M0.5 5.5L4 0.5V5.5" fill="none" stroke="#b0b0b0" stroke-width=".8"/></svg>
<div class="a" style="left:1427.5px;top:533px;width:495px;height:258.6px;overflow:hidden">
<div class="a " style="left:0px;top:14px;width:495px;height:1px;background:#e4e4e4;"></div>
<div class="a " style="left:0px;top:28px;width:495px;height:1px;background:#e4e4e4;"></div>
<div class="a " style="left:0px;top:42px;width:495px;height:1px;background:#e4e4e4;"></div>
<div class="a " style="left:0px;top:56px;width:495px;height:1px;background:#e4e4e4;"></div>
<div class="a " style="left:0px;top:71px;width:495px;height:1px;background:#e4e4e4;"></div>
<div class="a " style="left:0px;top:85px;width:495px;height:1px;background:#e4e4e4;"></div>
<div class="a " style="left:0px;top:99px;width:495px;height:1px;background:#e4e4e4;"></div>
<div class="a " style="left:0px;top:113px;width:495px;height:1px;background:#e4e4e4;"></div>
<div class="a " style="left:0px;top:127px;width:495px;height:1px;background:#e4e4e4;"></div>
<div class="a " style="left:0px;top:142px;width:495px;height:1px;background:#e4e4e4;"></div>
<div class="a " style="left:0px;top:156px;width:495px;height:1px;background:#e4e4e4;"></div>
<div class="a " style="left:0px;top:170px;width:495px;height:1px;background:#e4e4e4;"></div>
<div class="a " style="left:0px;top:184px;width:495px;height:1px;background:#e4e4e4;"></div>
<div class="a " style="left:0px;top:198px;width:495px;height:1px;background:#e4e4e4;"></div>
<div class="a " style="left:0px;top:213px;width:495px;height:1px;background:#e4e4e4;"></div>
<div class="a " style="left:0px;top:227px;width:495px;height:1px;background:#e4e4e4;"></div>
<div class="a " style="left:0px;top:241px;width:495px;height:1px;background:#e4e4e4;"></div>
<div class="a " style="left:0px;top:255px;width:495px;height:1px;background:#e4e4e4;"></div>
<div class="a " style="left:0px;top:269px;width:495px;height:1px;background:#e4e4e4;"></div>
<span class="t" style="left:13.47px;top:-0.04px;font-size:12px;line-height:14.4px;color:#1a1a1a;transform-origin:100% 0;transform:scaleX(0.849);">0.206</span>
<span class="t" style="left:48.0px;top:-0.04px;font-size:12px;line-height:14.4px;color:#1a1a1a;transform:scaleX(0.835);">pptp-fazenda</span>
<span class="t" style="left:143.5px;top:-0.04px;font-size:12px;line-height:14.4px;color:#1a1a1a;transform:scaleX(0.800);">rx</span>
<span class="t" style="left:192.0px;top:-0.04px;font-size:12px;line-height:14.4px;color:#1a1a1a;transform:scaleX(0.849);">10.24.9.2</span>
<span class="t" style="left:343.0px;top:-0.04px;font-size:12px;line-height:14.4px;color:#1a1a1a;transform:scaleX(0.844);">192.168.1.2</span>
<span class="t" style="left:13.47px;top:14.16px;font-size:12px;line-height:14.4px;color:#1a1a1a;transform-origin:100% 0;transform:scaleX(0.849);">0.206</span>
<span class="t" style="left:48.0px;top:14.16px;font-size:12px;line-height:14.4px;color:#1a1a1a;transform:scaleX(0.829);">bridge_cam</span>
<span class="t" style="left:143.5px;top:14.16px;font-size:12px;line-height:14.4px;color:#1a1a1a;transform:scaleX(0.857);">tx</span>
<span class="t" style="left:192.0px;top:14.16px;font-size:12px;line-height:14.4px;color:#1a1a1a;transform:scaleX(0.849);">10.24.9.2</span>
<span class="t" style="left:343.0px;top:14.16px;font-size:12px;line-height:14.4px;color:#1a1a1a;transform:scaleX(0.844);">192.168.1.2</span>
<span class="t" style="left:13.47px;top:28.36px;font-size:12px;line-height:14.4px;color:#1a1a1a;transform-origin:100% 0;transform:scaleX(0.849);">0.207</span>
<span class="t" style="left:48.0px;top:28.36px;font-size:12px;line-height:14.4px;color:#1a1a1a;transform:scaleX(0.830);">eth2-cam</span>
<span class="t" style="left:143.5px;top:28.36px;font-size:12px;line-height:14.4px;color:#1a1a1a;transform:scaleX(0.857);">tx</span>
<span class="t" style="left:192.0px;top:28.36px;font-size:12px;line-height:14.4px;color:#1a1a1a;transform:scaleX(0.849);">10.24.9.2</span>
<span class="t" style="left:343.0px;top:28.36px;font-size:12px;line-height:14.4px;color:#1a1a1a;transform:scaleX(0.844);">192.168.1.2</span>
<span class="t" style="left:13.47px;top:42.56px;font-size:12px;line-height:14.4px;color:#1a1a1a;transform-origin:100% 0;transform:scaleX(0.849);">1.074</span>
<span class="t" style="left:48.0px;top:42.56px;font-size:12px;line-height:14.4px;color:#1a1a1a;transform:scaleX(0.830);">eth2-cam</span>
<span class="t" style="left:143.5px;top:42.56px;font-size:12px;line-height:14.4px;color:#1a1a1a;transform:scaleX(0.800);">rx</span>
<span class="t" style="left:192.0px;top:42.56px;font-size:12px;line-height:14.4px;color:#1a1a1a;transform:scaleX(0.844);">192.168.1.2</span>
<span class="t" style="left:343.0px;top:42.56px;font-size:12px;line-height:14.4px;color:#1a1a1a;transform:scaleX(0.855);">224.0.0.22</span>
<span class="t" style="left:13.47px;top:56.76px;font-size:12px;line-height:14.4px;color:#1a1a1a;transform-origin:100% 0;transform:scaleX(0.849);">1.074</span>
<span class="t" style="left:48.0px;top:56.76px;font-size:12px;line-height:14.4px;color:#1a1a1a;transform:scaleX(0.829);">bridge_cam</span>
<span class="t" style="left:143.5px;top:56.76px;font-size:12px;line-height:14.4px;color:#1a1a1a;transform:scaleX(0.800);">rx</span>
<span class="t" style="left:192.0px;top:56.76px;font-size:12px;line-height:14.4px;color:#1a1a1a;transform:scaleX(0.844);">192.168.1.2</span>
<span class="t" style="left:343.0px;top:56.76px;font-size:12px;line-height:14.4px;color:#1a1a1a;transform:scaleX(0.855);">224.0.0.22</span>
<span class="t" style="left:14.36px;top:70.96px;font-size:12px;line-height:14.4px;color:#1a1a1a;transform-origin:100% 0;transform:scaleX(0.875);">1.114</span>
<span class="t" style="left:48.0px;top:70.96px;font-size:12px;line-height:14.4px;color:#1a1a1a;transform:scaleX(0.830);">eth2-cam</span>
<span class="t" style="left:143.5px;top:70.96px;font-size:12px;line-height:14.4px;color:#1a1a1a;transform:scaleX(0.800);">rx</span>
<span class="t" style="left:192.0px;top:70.96px;font-size:12px;line-height:14.4px;color:#1a1a1a;transform:scaleX(0.844);">192.168.1.2</span>
<span class="t" style="left:343.0px;top:70.96px;font-size:12px;line-height:14.4px;color:#1a1a1a;transform:scaleX(0.855);">224.0.0.22</span>
<span class="t" style="left:14.36px;top:85.16px;font-size:12px;line-height:14.4px;color:#1a1a1a;transform-origin:100% 0;transform:scaleX(0.875);">1.114</span>
<span class="t" style="left:48.0px;top:85.16px;font-size:12px;line-height:14.4px;color:#1a1a1a;transform:scaleX(0.829);">bridge_cam</span>
<span class="t" style="left:143.5px;top:85.16px;font-size:12px;line-height:14.4px;color:#1a1a1a;transform:scaleX(0.800);">rx</span>
<span class="t" style="left:192.0px;top:85.16px;font-size:12px;line-height:14.4px;color:#1a1a1a;transform:scaleX(0.844);">192.168.1.2</span>
<span class="t" style="left:343.0px;top:85.16px;font-size:12px;line-height:14.4px;color:#1a1a1a;transform:scaleX(0.855);">224.0.0.22</span>
<span class="t" style="left:13.47px;top:99.36px;font-size:12px;line-height:14.4px;color:#1a1a1a;transform-origin:100% 0;transform:scaleX(0.849);">1.212</span>
<span class="t" style="left:48.0px;top:99.36px;font-size:12px;line-height:14.4px;color:#1a1a1a;transform:scaleX(0.835);">pptp-fazenda</span>
<span class="t" style="left:143.5px;top:99.36px;font-size:12px;line-height:14.4px;color:#1a1a1a;transform:scaleX(0.800);">rx</span>
<span class="t" style="left:192.0px;top:99.36px;font-size:12px;line-height:14.4px;color:#1a1a1a;transform:scaleX(0.849);">10.24.9.2</span>
<span class="t" style="left:343.0px;top:99.36px;font-size:12px;line-height:14.4px;color:#1a1a1a;transform:scaleX(0.844);">192.168.1.2</span>
<span class="t" style="left:13.47px;top:113.56px;font-size:12px;line-height:14.4px;color:#1a1a1a;transform-origin:100% 0;transform:scaleX(0.849);">1.212</span>
<span class="t" style="left:48.0px;top:113.56px;font-size:12px;line-height:14.4px;color:#1a1a1a;transform:scaleX(0.829);">bridge_cam</span>
<span class="t" style="left:143.5px;top:113.56px;font-size:12px;line-height:14.4px;color:#1a1a1a;transform:scaleX(0.857);">tx</span>
<span class="t" style="left:192.0px;top:113.56px;font-size:12px;line-height:14.4px;color:#1a1a1a;transform:scaleX(0.849);">10.24.9.2</span>
<span class="t" style="left:343.0px;top:113.56px;font-size:12px;line-height:14.4px;color:#1a1a1a;transform:scaleX(0.844);">192.168.1.2</span>
<span class="t" style="left:13.47px;top:127.76px;font-size:12px;line-height:14.4px;color:#1a1a1a;transform-origin:100% 0;transform:scaleX(0.849);">1.212</span>
<span class="t" style="left:48.0px;top:127.76px;font-size:12px;line-height:14.4px;color:#1a1a1a;transform:scaleX(0.830);">eth2-cam</span>
<span class="t" style="left:143.5px;top:127.76px;font-size:12px;line-height:14.4px;color:#1a1a1a;transform:scaleX(0.857);">tx</span>
<span class="t" style="left:192.0px;top:127.76px;font-size:12px;line-height:14.4px;color:#1a1a1a;transform:scaleX(0.849);">10.24.9.2</span>
<span class="t" style="left:343.0px;top:127.76px;font-size:12px;line-height:14.4px;color:#1a1a1a;transform:scaleX(0.844);">192.168.1.2</span>
<span class="t" style="left:13.47px;top:141.96px;font-size:12px;line-height:14.4px;color:#1a1a1a;transform-origin:100% 0;transform:scaleX(0.849);">2.085</span>
<span class="t" style="left:48.0px;top:141.96px;font-size:12px;line-height:14.4px;color:#1a1a1a;transform:scaleX(0.830);">eth2-cam</span>
<span class="t" style="left:143.5px;top:141.96px;font-size:12px;line-height:14.4px;color:#1a1a1a;transform:scaleX(0.800);">rx</span>
<span class="t" style="left:192.0px;top:141.96px;font-size:12px;line-height:14.4px;color:#1a1a1a;transform:scaleX(0.844);">192.168.1.2</span>
<span class="t" style="left:343.0px;top:141.96px;font-size:12px;line-height:14.4px;color:#1a1a1a;transform:scaleX(0.855);">224.0.0.22</span>
<span class="t" style="left:13.47px;top:156.16px;font-size:12px;line-height:14.4px;color:#1a1a1a;transform-origin:100% 0;transform:scaleX(0.849);">2.085</span>
<span class="t" style="left:48.0px;top:156.16px;font-size:12px;line-height:14.4px;color:#1a1a1a;transform:scaleX(0.829);">bridge_cam</span>
<span class="t" style="left:143.5px;top:156.16px;font-size:12px;line-height:14.4px;color:#1a1a1a;transform:scaleX(0.800);">rx</span>
<span class="t" style="left:192.0px;top:156.16px;font-size:12px;line-height:14.4px;color:#1a1a1a;transform:scaleX(0.844);">192.168.1.2</span>
<span class="t" style="left:343.0px;top:156.16px;font-size:12px;line-height:14.4px;color:#1a1a1a;transform:scaleX(0.855);">224.0.0.22</span>
<span class="t" style="left:13.47px;top:170.36px;font-size:12px;line-height:14.4px;color:#1a1a1a;transform-origin:100% 0;transform:scaleX(0.849);">2.214</span>
<span class="t" style="left:48.0px;top:170.36px;font-size:12px;line-height:14.4px;color:#1a1a1a;transform:scaleX(0.835);">pptp-fazenda</span>
<span class="t" style="left:143.5px;top:170.36px;font-size:12px;line-height:14.4px;color:#1a1a1a;transform:scaleX(0.800);">rx</span>
<span class="t" style="left:192.0px;top:170.36px;font-size:12px;line-height:14.4px;color:#1a1a1a;transform:scaleX(0.849);">10.24.9.2</span>
<span class="t" style="left:343.0px;top:170.36px;font-size:12px;line-height:14.4px;color:#1a1a1a;transform:scaleX(0.844);">192.168.1.2</span>
<span class="t" style="left:13.47px;top:184.56px;font-size:12px;line-height:14.4px;color:#1a1a1a;transform-origin:100% 0;transform:scaleX(0.849);">2.214</span>
<span class="t" style="left:48.0px;top:184.56px;font-size:12px;line-height:14.4px;color:#1a1a1a;transform:scaleX(0.829);">bridge_cam</span>
<span class="t" style="left:143.5px;top:184.56px;font-size:12px;line-height:14.4px;color:#1a1a1a;transform:scaleX(0.857);">tx</span>
<span class="t" style="left:192.0px;top:184.56px;font-size:12px;line-height:14.4px;color:#1a1a1a;transform:scaleX(0.849);">10.24.9.2</span>
<span class="t" style="left:343.0px;top:184.56px;font-size:12px;line-height:14.4px;color:#1a1a1a;transform:scaleX(0.844);">192.168.1.2</span>
<span class="t" style="left:13.47px;top:198.76px;font-size:12px;line-height:14.4px;color:#1a1a1a;transform-origin:100% 0;transform:scaleX(0.849);">2.214</span>
<span class="t" style="left:48.0px;top:198.76px;font-size:12px;line-height:14.4px;color:#1a1a1a;transform:scaleX(0.830);">eth2-cam</span>
<span class="t" style="left:143.5px;top:198.76px;font-size:12px;line-height:14.4px;color:#1a1a1a;transform:scaleX(0.857);">tx</span>
<span class="t" style="left:192.0px;top:198.76px;font-size:12px;line-height:14.4px;color:#1a1a1a;transform:scaleX(0.849);">10.24.9.2</span>
<span class="t" style="left:343.0px;top:198.76px;font-size:12px;line-height:14.4px;color:#1a1a1a;transform:scaleX(0.844);">192.168.1.2</span>
<span class="t" style="left:13.47px;top:212.96px;font-size:12px;line-height:14.4px;color:#1a1a1a;transform-origin:100% 0;transform:scaleX(0.849);">2.378</span>
<span class="t" style="left:48.0px;top:212.96px;font-size:12px;line-height:14.4px;color:#1a1a1a;transform:scaleX(0.830);">eth2-cam</span>
<span class="t" style="left:143.5px;top:212.96px;font-size:12px;line-height:14.4px;color:#1a1a1a;transform:scaleX(0.800);">rx</span>
<span class="t" style="left:192.0px;top:212.96px;font-size:12px;line-height:14.4px;color:#1a1a1a;transform:scaleX(0.844);">192.168.1.2</span>
<span class="t" style="left:311.30px;top:212.96px;font-size:12px;line-height:14.4px;color:#1a1a1a;transform-origin:100% 0;transform:scaleX(0.843);">5050</span>
<span class="t" style="left:343.0px;top:212.96px;font-size:12px;line-height:14.4px;color:#1a1a1a;transform:scaleX(0.855);">255.255.255.255</span>
<span class="t" style="left:462.80px;top:212.96px;font-size:12px;line-height:14.4px;color:#1a1a1a;transform-origin:100% 0;transform:scaleX(0.843);">5050</span>
<span class="t" style="left:13.47px;top:227.16px;font-size:12px;line-height:14.4px;color:#1a1a1a;transform-origin:100% 0;transform:scaleX(0.849);">2.378</span>
<span class="t" style="left:48.0px;top:227.16px;font-size:12px;line-height:14.4px;color:#1a1a1a;transform:scaleX(0.829);">bridge_cam</span>
<span class="t" style="left:143.5px;top:227.16px;font-size:12px;line-height:14.4px;color:#1a1a1a;transform:scaleX(0.800);">rx</span>
<span class="t" style="left:192.0px;top:227.16px;font-size:12px;line-height:14.4px;color:#1a1a1a;transform:scaleX(0.844);">192.168.1.2</span>
<span class="t" style="left:311.30px;top:227.16px;font-size:12px;line-height:14.4px;color:#1a1a1a;transform-origin:100% 0;transform:scaleX(0.843);">5050</span>
<span class="t" style="left:343.0px;top:227.16px;font-size:12px;line-height:14.4px;color:#1a1a1a;transform:scaleX(0.855);">255.255.255.255</span>
<span class="t" style="left:462.80px;top:227.16px;font-size:12px;line-height:14.4px;color:#1a1a1a;transform-origin:100% 0;transform:scaleX(0.843);">5050</span>
<span class="t" style="left:13.47px;top:241.36px;font-size:12px;line-height:14.4px;color:#1a1a1a;transform-origin:100% 0;transform:scaleX(0.849);">3.218</span>
<span class="t" style="left:48.0px;top:241.36px;font-size:12px;line-height:14.4px;color:#1a1a1a;transform:scaleX(0.835);">pptp-fazenda</span>
<span class="t" style="left:143.5px;top:241.36px;font-size:12px;line-height:14.4px;color:#1a1a1a;transform:scaleX(0.800);">rx</span>
<span class="t" style="left:192.0px;top:241.36px;font-size:12px;line-height:14.4px;color:#1a1a1a;transform:scaleX(0.849);">10.24.9.2</span>
<span class="t" style="left:343.0px;top:241.36px;font-size:12px;line-height:14.4px;color:#1a1a1a;transform:scaleX(0.844);">192.168.1.2</span>
<span class="t" style="left:13.47px;top:255.56px;font-size:12px;line-height:14.4px;color:#1a1a1a;transform-origin:100% 0;transform:scaleX(0.849);">3.218</span>
<span class="t" style="left:48.0px;top:255.56px;font-size:12px;line-height:14.4px;color:#1a1a1a;transform:scaleX(0.829);">bridge_cam</span>
<span class="t" style="left:143.5px;top:255.56px;font-size:12px;line-height:14.4px;color:#1a1a1a;transform:scaleX(0.857);">tx</span>
<span class="t" style="left:192.0px;top:255.56px;font-size:12px;line-height:14.4px;color:#1a1a1a;transform:scaleX(0.849);">10.24.9.2</span>
<span class="t" style="left:343.0px;top:255.56px;font-size:12px;line-height:14.4px;color:#1a1a1a;transform:scaleX(0.844);">192.168.1.2</span>
</div>
<div class="a " style="left:1427.5px;top:533px;width:495px;height:14px;border:1px dotted #b0b0b0;"></div>
<div class="a " style="left:1426px;top:792px;width:500px;height:20px;background:#f0f0f0;border-left:1px solid #cfcfcf;"></div>
<span class="t" style="left:1428.3px;top:793.86px;font-size:12px;line-height:14.4px;color:#222;transform:scaleX(0.794);">22 items</span>
<svg style="left:1400px;top:540px" width="460" height="70"><rect x="33.45" y="19.45" width="406.3" height="32.1" fill="none" stroke="#23a44e" stroke-width="4.5"/></svg>
</div>
</body></html>
